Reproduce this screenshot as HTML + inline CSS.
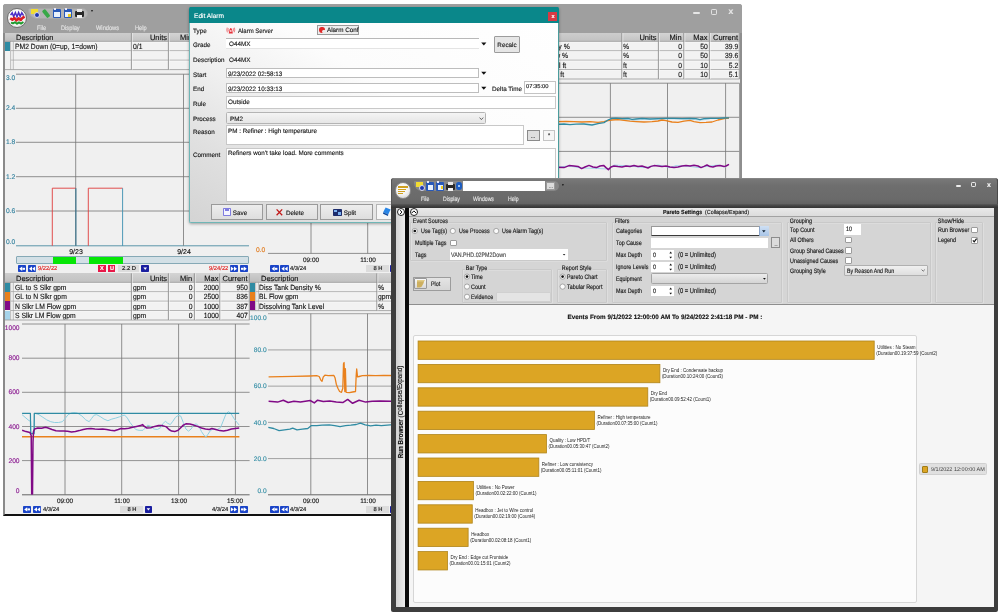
<!DOCTYPE html><html><head><meta charset="utf-8"><title>PARCview</title><style>
*{box-sizing:border-box;margin:0;padding:0}
html,body{width:1000px;height:613px;overflow:hidden;background:#fff}
body{position:relative;font-family:"Liberation Sans",sans-serif}
.a{position:absolute}
.t{white-space:nowrap;transform:rotate(.03deg);-webkit-text-stroke-width:.13px}
svg{position:absolute;left:0;top:0;overflow:visible}
.win{position:absolute;overflow:hidden;will-change:transform}
</style></head><body>
<div class="win" id="w1" style="left:0;top:0;width:745px;height:520px">
<div class="a " style="left:3.00px;top:4.00px;width:739.00px;height:512.00px;background:#f0f0f0;border-left:2px solid #8a8a8a;border-right:2px solid #8e8e8e;border-bottom:2px solid #111;border-radius:3px 3px 0 0"></div>
<div class="a " style="left:3.00px;top:4.00px;width:739.00px;height:29.00px;background:#9f9f9f;border-radius:3px 3px 0 0"></div>
<div class="a " style="left:7.40px;top:8.40px;width:19.80px;height:19.80px;border-radius:50%;background:radial-gradient(circle at 45% 40%,#fff 0,#f6f6f6 55%,#cfcfcf 100%);border:1.1px solid #6e6e6e"></div>
<svg width="745" height="40"><polyline points="10.6,15.2 12.2,12.8 13.6,16.6 15.4,12.6 17,16.8 18.6,12.6 20.2,16.4 21.8,12.8 23.6,15.6" fill="none" stroke="#4a2cc8" stroke-width="1.5"/><polyline points="10.2,18.2 12.4,19.8 14.4,18 16.4,20.4 18.6,18.4 20.8,20 22.6,17.8 24.6,16.6" fill="none" stroke="#dc1c24" stroke-width="2.6" stroke-linejoin="round"/><polyline points="11,22.6 13,23.4 15,22.2 17,23.8 19,22.4 21,23.6 23.4,22" fill="none" stroke="#1c9a2c" stroke-width="1.9" stroke-linejoin="round"/></svg>
<div class="a " style="left:28.00px;top:7.50px;width:60.00px;height:11.00px;background:#b4b4b4;border-radius:2px 6px 6px 10px;border:0.5px solid #a8a8a8"></div>
<div class="a " style="left:31.00px;top:8.50px;width:7.00px;height:5.00px;background:#f2dc30"></div><div class="a " style="left:33.50px;top:11.50px;width:6.00px;height:6.00px;background:#2038b0;border-radius:50%;border:1px solid #d8d8e8"></div>
<div class="a " style="left:44.40px;top:8.80px;width:4.20px;height:8.60px;background:#38a848;transform:rotate(-38deg);border-radius:1.2px"></div>
<div class="a " style="left:53.00px;top:9.00px;width:8.00px;height:8.50px;background:#2858b8;border-radius:1px"></div><div class="a " style="left:54.20px;top:12.00px;width:5.60px;height:4.50px;background:#e8f0fc"></div><div class="a " style="left:54.00px;top:8.20px;width:2.00px;height:2.00px;background:#e8e8f8"></div>
<div class="a " style="left:64.00px;top:9.00px;width:8.00px;height:8.50px;background:#2858b8;border-radius:1px"></div><div class="a " style="left:65.20px;top:12.00px;width:5.60px;height:4.50px;background:#e8f0fc"></div><div class="a " style="left:65.00px;top:8.20px;width:2.00px;height:2.00px;background:#e8e8f8"></div>
<div class="a " style="left:68.40px;top:13.60px;width:3.00px;height:3.00px;background:#f0d020"></div>
<div class="a " style="left:75.00px;top:11.00px;width:9.00px;height:5.50px;background:#282828;border-radius:1px"></div><div class="a " style="left:77.00px;top:9.00px;width:5.00px;height:2.50px;background:#e8e8e8"></div><div class="a " style="left:77.00px;top:14.50px;width:5.00px;height:3.00px;background:#f4f4f4"></div>
<div class="a t " style="left:91.20px;top:9.20px;font-size:4px;line-height:4.80px;color:#222;">▾</div>
<div class="a t " style="left:37.00px;top:23.66px;font-size:6.4px;line-height:7.68px;color:#e4e4e4;transform:scaleX(0.89) rotate(.03deg);transform-origin:0 50%;">File</div>
<div class="a t " style="left:61.00px;top:23.66px;font-size:6.4px;line-height:7.68px;color:#e4e4e4;transform:scaleX(0.89) rotate(.03deg);transform-origin:0 50%;">Display</div>
<div class="a t " style="left:95.50px;top:23.66px;font-size:6.4px;line-height:7.68px;color:#e4e4e4;transform:scaleX(0.89) rotate(.03deg);transform-origin:0 50%;">Windows</div>
<div class="a t " style="left:134.50px;top:23.66px;font-size:6.4px;line-height:7.68px;color:#e4e4e4;transform:scaleX(0.89) rotate(.03deg);transform-origin:0 50%;">Help</div>
<div class="a " style="left:693.40px;top:11.90px;width:6.20px;height:2.10px;background:#e6e6e6;border-radius:1px"></div>
<div class="a " style="left:710.60px;top:9.20px;width:6.80px;height:5.60px;border:1.5px solid #e2e2e2;border-radius:1.2px"></div>
<div class="a t " style="left:631.00px;width:200px;text-align:center;top:6.24px;font-size:8.6px;line-height:10.32px;color:#e8e8e8;font-weight:bold">x</div>
<div class="a " style="left:5.00px;top:33.00px;width:244.60px;height:37.00px;background:#f2f2f2"></div><div class="a " style="left:5.00px;top:33.00px;width:244.60px;height:8.40px;background:linear-gradient(#cfcfcf,#bdbdbd)"></div><div class="a " style="left:14.50px;top:33.00px;width:116.50px;height:8.40px;background:linear-gradient(#cdcdcd,#c2c2c2)"></div><div class="a t " style="left:16.00px;top:32.90px;font-size:7.5px;line-height:9.00px;color:#111;">Description</div><div class="a " style="left:131.50px;top:33.00px;width:36.50px;height:8.40px;background:linear-gradient(#d4d4d4,#c3c3c3)"></div><div class="a t" style="left:131.5px;width:35.00px;text-align:right;top:32.90px;font-size:7.5px;line-height:9.00px;color:#111">Units</div><div class="a " style="left:168.50px;top:33.00px;width:24.70px;height:8.40px;background:linear-gradient(#d4d4d4,#c3c3c3)"></div><div class="a t" style="left:168.5px;width:23.20px;text-align:right;top:32.90px;font-size:7.5px;line-height:9.00px;color:#111">Min</div><div class="a " style="left:194.50px;top:33.00px;width:25.00px;height:8.40px;background:linear-gradient(#d4d4d4,#c3c3c3)"></div><div class="a t" style="left:194.5px;width:23.50px;text-align:right;top:32.90px;font-size:7.5px;line-height:9.00px;color:#111">Max</div><div class="a " style="left:220.00px;top:33.00px;width:29.00px;height:8.40px;background:linear-gradient(#d4d4d4,#c3c3c3)"></div><div class="a t" style="left:220px;width:27.50px;text-align:right;top:32.90px;font-size:7.5px;line-height:9.00px;color:#111">Current</div><div class="a " style="left:4.90px;top:41.60px;width:5.30px;height:9.10px;background:#2f8ba3"></div><div class="a t " style="left:14.90px;top:41.85px;font-size:7.5px;line-height:9.00px;color:#111;transform:scaleX(0.905) rotate(.03deg);transform-origin:0 50%;">PM2 Down (0=up, 1=down)</div><div class="a t " style="left:132.70px;top:41.85px;font-size:7.5px;line-height:9.00px;color:#111;transform:scaleX(0.905) rotate(.03deg);transform-origin:0 50%;">0/1</div><svg width="745" height="520"><line x1="5.00" y1="41.40" x2="249.60" y2="41.40" stroke="#909090" stroke-width="0.9"/><line x1="10.80" y1="42.20" x2="249.60" y2="42.20" stroke="#fbfbfb" stroke-width="0.6"/><line x1="10.80" y1="50.80" x2="249.60" y2="50.80" stroke="#a2a2a2" stroke-width="0.9"/><line x1="10.80" y1="51.60" x2="249.60" y2="51.60" stroke="#fbfbfb" stroke-width="0.6"/><line x1="10.80" y1="60.20" x2="249.60" y2="60.20" stroke="#a2a2a2" stroke-width="0.9"/><line x1="10.80" y1="61.00" x2="249.60" y2="61.00" stroke="#fbfbfb" stroke-width="0.6"/><line x1="5.00" y1="69.60" x2="249.60" y2="69.60" stroke="#a2a2a2" stroke-width="0.9"/><line x1="10.60" y1="41.40" x2="10.60" y2="69.60" stroke="#9a9a9a" stroke-width="0.6"/><line x1="13.30" y1="41.40" x2="13.30" y2="69.60" stroke="#9a9a9a" stroke-width="0.6"/><line x1="131.40" y1="33.00" x2="131.40" y2="69.60" stroke="#8c8c8c" stroke-width="1.0"/><line x1="132.30" y1="33.00" x2="132.30" y2="69.60" stroke="#f8f8f8" stroke-width="0.6"/><line x1="168.40" y1="33.00" x2="168.40" y2="69.60" stroke="#8c8c8c" stroke-width="1.0"/><line x1="169.30" y1="33.00" x2="169.30" y2="69.60" stroke="#f8f8f8" stroke-width="0.6"/><line x1="194.40" y1="33.00" x2="194.40" y2="69.60" stroke="#8c8c8c" stroke-width="1.0"/><line x1="195.30" y1="33.00" x2="195.30" y2="69.60" stroke="#f8f8f8" stroke-width="0.6"/><line x1="219.90" y1="33.00" x2="219.90" y2="69.60" stroke="#8c8c8c" stroke-width="1.0"/><line x1="220.80" y1="33.00" x2="220.80" y2="69.60" stroke="#f8f8f8" stroke-width="0.6"/><line x1="249.30" y1="33.00" x2="249.30" y2="69.60" stroke="#8c8c8c" stroke-width="0.9"/></svg>
<div class="a " style="left:250.10px;top:33.00px;width:489.50px;height:46.40px;background:#f2f2f2"></div><div class="a " style="left:250.10px;top:33.00px;width:489.50px;height:8.40px;background:linear-gradient(#cfcfcf,#bdbdbd)"></div><div class="a " style="left:259.00px;top:33.00px;width:362.50px;height:8.40px;background:linear-gradient(#cdcdcd,#c2c2c2)"></div><div class="a t " style="left:260.50px;top:32.90px;font-size:7.5px;line-height:9.00px;color:#111;">Description</div><div class="a " style="left:622.00px;top:33.00px;width:36.00px;height:8.40px;background:linear-gradient(#d4d4d4,#c3c3c3)"></div><div class="a t" style="left:622px;width:34.50px;text-align:right;top:32.90px;font-size:7.5px;line-height:9.00px;color:#111">Units</div><div class="a " style="left:658.50px;top:33.00px;width:24.20px;height:8.40px;background:linear-gradient(#d4d4d4,#c3c3c3)"></div><div class="a t" style="left:658.5px;width:22.70px;text-align:right;top:32.90px;font-size:7.5px;line-height:9.00px;color:#111">Min</div><div class="a " style="left:684.00px;top:33.00px;width:25.00px;height:8.40px;background:linear-gradient(#d4d4d4,#c3c3c3)"></div><div class="a t" style="left:684px;width:23.50px;text-align:right;top:32.90px;font-size:7.5px;line-height:9.00px;color:#111">Max</div><div class="a " style="left:709.50px;top:33.00px;width:29.50px;height:8.40px;background:linear-gradient(#d4d4d4,#c3c3c3)"></div><div class="a t" style="left:709.5px;width:28.00px;text-align:right;top:32.90px;font-size:7.5px;line-height:9.00px;color:#111">Current</div><div class="a " style="left:250.00px;top:41.60px;width:5.30px;height:9.10px;background:#2f8ba3"></div><div class="a t " style="right:175.00px;top:41.85px;font-size:7.5px;line-height:9.00px;color:#111;transform:scaleX(0.905) rotate(.03deg);transform-origin:100% 50%;">Dissolving Tank Green Liquor Density %</div><div class="a t " style="left:623.20px;top:41.85px;font-size:7.5px;line-height:9.00px;color:#111;transform:scaleX(0.905) rotate(.03deg);transform-origin:0 50%;">%</div><div class="a t" style="left:658.5px;width:23.00px;text-align:right;top:41.85px;font-size:7.5px;line-height:9.00px;color:#111;transform:scaleX(0.905) rotate(.03deg);transform-origin:100% 50%">0</div><div class="a t" style="left:684px;width:23.80px;text-align:right;top:41.85px;font-size:7.5px;line-height:9.00px;color:#111;transform:scaleX(0.905) rotate(.03deg);transform-origin:100% 50%">50</div><div class="a t" style="left:709.5px;width:28.30px;text-align:right;top:41.85px;font-size:7.5px;line-height:9.00px;color:#111;transform:scaleX(0.905) rotate(.03deg);transform-origin:100% 50%">39.9</div><div class="a " style="left:250.00px;top:51.00px;width:5.30px;height:9.10px;background:#e9801c"></div><div class="a t " style="right:177.20px;top:51.25px;font-size:7.5px;line-height:9.00px;color:#111;transform:scaleX(0.905) rotate(.03deg);transform-origin:100% 50%;">Weak Wash to Dissolving Tank Flow %</div><div class="a t " style="left:623.20px;top:51.25px;font-size:7.5px;line-height:9.00px;color:#111;transform:scaleX(0.905) rotate(.03deg);transform-origin:0 50%;">%</div><div class="a t" style="left:658.5px;width:23.00px;text-align:right;top:51.25px;font-size:7.5px;line-height:9.00px;color:#111;transform:scaleX(0.905) rotate(.03deg);transform-origin:100% 50%">0</div><div class="a t" style="left:684px;width:23.80px;text-align:right;top:51.25px;font-size:7.5px;line-height:9.00px;color:#111;transform:scaleX(0.905) rotate(.03deg);transform-origin:100% 50%">50</div><div class="a t" style="left:709.5px;width:28.30px;text-align:right;top:51.25px;font-size:7.5px;line-height:9.00px;color:#111;transform:scaleX(0.905) rotate(.03deg);transform-origin:100% 50%">39.6</div><div class="a " style="left:250.00px;top:60.40px;width:5.30px;height:9.10px;background:#800a86"></div><div class="a t " style="right:178.60px;top:60.65px;font-size:7.5px;line-height:9.00px;color:#111;transform:scaleX(0.905) rotate(.03deg);transform-origin:100% 50%;">Dissolving Tank Level ft</div><div class="a t " style="left:623.20px;top:60.65px;font-size:7.5px;line-height:9.00px;color:#111;transform:scaleX(0.905) rotate(.03deg);transform-origin:0 50%;">ft</div><div class="a t" style="left:658.5px;width:23.00px;text-align:right;top:60.65px;font-size:7.5px;line-height:9.00px;color:#111;transform:scaleX(0.905) rotate(.03deg);transform-origin:100% 50%">0</div><div class="a t" style="left:684px;width:23.80px;text-align:right;top:60.65px;font-size:7.5px;line-height:9.00px;color:#111;transform:scaleX(0.905) rotate(.03deg);transform-origin:100% 50%">10</div><div class="a t" style="left:709.5px;width:28.30px;text-align:right;top:60.65px;font-size:7.5px;line-height:9.00px;color:#111;transform:scaleX(0.905) rotate(.03deg);transform-origin:100% 50%">5.2</div><div class="a " style="left:250.00px;top:69.80px;width:5.30px;height:9.10px;background:#a6d4ea"></div><div class="a t " style="right:180.80px;top:70.05px;font-size:7.5px;line-height:9.00px;color:#111;transform:scaleX(0.905) rotate(.03deg);transform-origin:100% 50%;">Weak Wash Tank Level ft</div><div class="a t " style="left:623.20px;top:70.05px;font-size:7.5px;line-height:9.00px;color:#111;transform:scaleX(0.905) rotate(.03deg);transform-origin:0 50%;">ft</div><div class="a t" style="left:658.5px;width:23.00px;text-align:right;top:70.05px;font-size:7.5px;line-height:9.00px;color:#111;transform:scaleX(0.905) rotate(.03deg);transform-origin:100% 50%">0</div><div class="a t" style="left:684px;width:23.80px;text-align:right;top:70.05px;font-size:7.5px;line-height:9.00px;color:#111;transform:scaleX(0.905) rotate(.03deg);transform-origin:100% 50%">10</div><div class="a t" style="left:709.5px;width:28.30px;text-align:right;top:70.05px;font-size:7.5px;line-height:9.00px;color:#111;transform:scaleX(0.905) rotate(.03deg);transform-origin:100% 50%">5.1</div><svg width="745" height="520"><line x1="250.10" y1="41.40" x2="739.60" y2="41.40" stroke="#909090" stroke-width="0.9"/><line x1="255.90" y1="42.20" x2="739.60" y2="42.20" stroke="#fbfbfb" stroke-width="0.6"/><line x1="255.90" y1="50.80" x2="739.60" y2="50.80" stroke="#a2a2a2" stroke-width="0.9"/><line x1="255.90" y1="51.60" x2="739.60" y2="51.60" stroke="#fbfbfb" stroke-width="0.6"/><line x1="255.90" y1="60.20" x2="739.60" y2="60.20" stroke="#a2a2a2" stroke-width="0.9"/><line x1="255.90" y1="61.00" x2="739.60" y2="61.00" stroke="#fbfbfb" stroke-width="0.6"/><line x1="255.90" y1="69.60" x2="739.60" y2="69.60" stroke="#a2a2a2" stroke-width="0.9"/><line x1="255.90" y1="70.40" x2="739.60" y2="70.40" stroke="#fbfbfb" stroke-width="0.6"/><line x1="250.10" y1="79.00" x2="739.60" y2="79.00" stroke="#a2a2a2" stroke-width="0.9"/><line x1="255.70" y1="41.40" x2="255.70" y2="79.00" stroke="#9a9a9a" stroke-width="0.6"/><line x1="258.40" y1="41.40" x2="258.40" y2="79.00" stroke="#9a9a9a" stroke-width="0.6"/><line x1="621.90" y1="33.00" x2="621.90" y2="79.00" stroke="#8c8c8c" stroke-width="1.0"/><line x1="622.80" y1="33.00" x2="622.80" y2="79.00" stroke="#f8f8f8" stroke-width="0.6"/><line x1="658.40" y1="33.00" x2="658.40" y2="79.00" stroke="#8c8c8c" stroke-width="1.0"/><line x1="659.30" y1="33.00" x2="659.30" y2="79.00" stroke="#f8f8f8" stroke-width="0.6"/><line x1="683.90" y1="33.00" x2="683.90" y2="79.00" stroke="#8c8c8c" stroke-width="1.0"/><line x1="684.80" y1="33.00" x2="684.80" y2="79.00" stroke="#f8f8f8" stroke-width="0.6"/><line x1="709.40" y1="33.00" x2="709.40" y2="79.00" stroke="#8c8c8c" stroke-width="1.0"/><line x1="710.30" y1="33.00" x2="710.30" y2="79.00" stroke="#f8f8f8" stroke-width="0.6"/><line x1="739.30" y1="33.00" x2="739.30" y2="79.00" stroke="#8c8c8c" stroke-width="0.9"/></svg>
<div class="a " style="left:5.00px;top:273.40px;width:244.60px;height:47.00px;background:#f2f2f2"></div><div class="a " style="left:5.00px;top:273.40px;width:244.60px;height:9.00px;background:linear-gradient(#cfcfcf,#bdbdbd)"></div><div class="a " style="left:14.50px;top:273.40px;width:116.50px;height:9.00px;background:linear-gradient(#cdcdcd,#c2c2c2)"></div><div class="a t " style="left:16.00px;top:273.60px;font-size:7.5px;line-height:9.00px;color:#111;">Description</div><div class="a " style="left:131.50px;top:273.40px;width:36.50px;height:9.00px;background:linear-gradient(#d4d4d4,#c3c3c3)"></div><div class="a t" style="left:131.5px;width:35.00px;text-align:right;top:273.60px;font-size:7.5px;line-height:9.00px;color:#111">Units</div><div class="a " style="left:168.50px;top:273.40px;width:24.70px;height:9.00px;background:linear-gradient(#d4d4d4,#c3c3c3)"></div><div class="a t" style="left:168.5px;width:23.20px;text-align:right;top:273.60px;font-size:7.5px;line-height:9.00px;color:#111">Min</div><div class="a " style="left:194.50px;top:273.40px;width:25.00px;height:9.00px;background:linear-gradient(#d4d4d4,#c3c3c3)"></div><div class="a t" style="left:194.5px;width:23.50px;text-align:right;top:273.60px;font-size:7.5px;line-height:9.00px;color:#111">Max</div><div class="a " style="left:220.00px;top:273.40px;width:29.00px;height:9.00px;background:linear-gradient(#d4d4d4,#c3c3c3)"></div><div class="a t" style="left:220px;width:27.50px;text-align:right;top:273.60px;font-size:7.5px;line-height:9.00px;color:#111">Current</div><div class="a " style="left:4.90px;top:282.60px;width:5.30px;height:9.10px;background:#2f8ba3"></div><div class="a t " style="left:14.90px;top:282.85px;font-size:7.5px;line-height:9.00px;color:#111;transform:scaleX(0.905) rotate(.03deg);transform-origin:0 50%;">GL to S Slkr gpm</div><div class="a t " style="left:132.70px;top:282.85px;font-size:7.5px;line-height:9.00px;color:#111;transform:scaleX(0.905) rotate(.03deg);transform-origin:0 50%;">gpm</div><div class="a t" style="left:168.5px;width:23.50px;text-align:right;top:282.85px;font-size:7.5px;line-height:9.00px;color:#111;transform:scaleX(0.905) rotate(.03deg);transform-origin:100% 50%">0</div><div class="a t" style="left:194.5px;width:23.80px;text-align:right;top:282.85px;font-size:7.5px;line-height:9.00px;color:#111;transform:scaleX(0.905) rotate(.03deg);transform-origin:100% 50%">2000</div><div class="a t" style="left:220px;width:27.80px;text-align:right;top:282.85px;font-size:7.5px;line-height:9.00px;color:#111;transform:scaleX(0.905) rotate(.03deg);transform-origin:100% 50%">950</div><div class="a " style="left:4.90px;top:292.00px;width:5.30px;height:9.10px;background:#e9801c"></div><div class="a t " style="left:14.90px;top:292.25px;font-size:7.5px;line-height:9.00px;color:#111;transform:scaleX(0.905) rotate(.03deg);transform-origin:0 50%;">GL to N Slkr gpm</div><div class="a t " style="left:132.70px;top:292.25px;font-size:7.5px;line-height:9.00px;color:#111;transform:scaleX(0.905) rotate(.03deg);transform-origin:0 50%;">gpm</div><div class="a t" style="left:168.5px;width:23.50px;text-align:right;top:292.25px;font-size:7.5px;line-height:9.00px;color:#111;transform:scaleX(0.905) rotate(.03deg);transform-origin:100% 50%">0</div><div class="a t" style="left:194.5px;width:23.80px;text-align:right;top:292.25px;font-size:7.5px;line-height:9.00px;color:#111;transform:scaleX(0.905) rotate(.03deg);transform-origin:100% 50%">2500</div><div class="a t" style="left:220px;width:27.80px;text-align:right;top:292.25px;font-size:7.5px;line-height:9.00px;color:#111;transform:scaleX(0.905) rotate(.03deg);transform-origin:100% 50%">836</div><div class="a " style="left:4.90px;top:301.40px;width:5.30px;height:9.10px;background:#800a86"></div><div class="a t " style="left:14.90px;top:301.65px;font-size:7.5px;line-height:9.00px;color:#111;transform:scaleX(0.905) rotate(.03deg);transform-origin:0 50%;">N Slkr LM Flow gpm</div><div class="a t " style="left:132.70px;top:301.65px;font-size:7.5px;line-height:9.00px;color:#111;transform:scaleX(0.905) rotate(.03deg);transform-origin:0 50%;">gpm</div><div class="a t" style="left:168.5px;width:23.50px;text-align:right;top:301.65px;font-size:7.5px;line-height:9.00px;color:#111;transform:scaleX(0.905) rotate(.03deg);transform-origin:100% 50%">0</div><div class="a t" style="left:194.5px;width:23.80px;text-align:right;top:301.65px;font-size:7.5px;line-height:9.00px;color:#111;transform:scaleX(0.905) rotate(.03deg);transform-origin:100% 50%">1000</div><div class="a t" style="left:220px;width:27.80px;text-align:right;top:301.65px;font-size:7.5px;line-height:9.00px;color:#111;transform:scaleX(0.905) rotate(.03deg);transform-origin:100% 50%">387</div><div class="a " style="left:4.90px;top:310.80px;width:5.30px;height:9.10px;background:#a6d4ea"></div><div class="a t " style="left:14.90px;top:311.05px;font-size:7.5px;line-height:9.00px;color:#111;transform:scaleX(0.905) rotate(.03deg);transform-origin:0 50%;">S Slkr LM Flow gpm</div><div class="a t " style="left:132.70px;top:311.05px;font-size:7.5px;line-height:9.00px;color:#111;transform:scaleX(0.905) rotate(.03deg);transform-origin:0 50%;">gpm</div><div class="a t" style="left:168.5px;width:23.50px;text-align:right;top:311.05px;font-size:7.5px;line-height:9.00px;color:#111;transform:scaleX(0.905) rotate(.03deg);transform-origin:100% 50%">0</div><div class="a t" style="left:194.5px;width:23.80px;text-align:right;top:311.05px;font-size:7.5px;line-height:9.00px;color:#111;transform:scaleX(0.905) rotate(.03deg);transform-origin:100% 50%">1000</div><div class="a t" style="left:220px;width:27.80px;text-align:right;top:311.05px;font-size:7.5px;line-height:9.00px;color:#111;transform:scaleX(0.905) rotate(.03deg);transform-origin:100% 50%">407</div><svg width="745" height="520"><line x1="5.00" y1="282.40" x2="249.60" y2="282.40" stroke="#909090" stroke-width="0.9"/><line x1="10.80" y1="283.20" x2="249.60" y2="283.20" stroke="#fbfbfb" stroke-width="0.6"/><line x1="10.80" y1="291.80" x2="249.60" y2="291.80" stroke="#a2a2a2" stroke-width="0.9"/><line x1="10.80" y1="292.60" x2="249.60" y2="292.60" stroke="#fbfbfb" stroke-width="0.6"/><line x1="10.80" y1="301.20" x2="249.60" y2="301.20" stroke="#a2a2a2" stroke-width="0.9"/><line x1="10.80" y1="302.00" x2="249.60" y2="302.00" stroke="#fbfbfb" stroke-width="0.6"/><line x1="10.80" y1="310.60" x2="249.60" y2="310.60" stroke="#a2a2a2" stroke-width="0.9"/><line x1="10.80" y1="311.40" x2="249.60" y2="311.40" stroke="#fbfbfb" stroke-width="0.6"/><line x1="5.00" y1="320.00" x2="249.60" y2="320.00" stroke="#a2a2a2" stroke-width="0.9"/><line x1="10.60" y1="282.40" x2="10.60" y2="320.00" stroke="#9a9a9a" stroke-width="0.6"/><line x1="13.30" y1="282.40" x2="13.30" y2="320.00" stroke="#9a9a9a" stroke-width="0.6"/><line x1="131.40" y1="273.40" x2="131.40" y2="320.00" stroke="#8c8c8c" stroke-width="1.0"/><line x1="132.30" y1="273.40" x2="132.30" y2="320.00" stroke="#f8f8f8" stroke-width="0.6"/><line x1="168.40" y1="273.40" x2="168.40" y2="320.00" stroke="#8c8c8c" stroke-width="1.0"/><line x1="169.30" y1="273.40" x2="169.30" y2="320.00" stroke="#f8f8f8" stroke-width="0.6"/><line x1="194.40" y1="273.40" x2="194.40" y2="320.00" stroke="#8c8c8c" stroke-width="1.0"/><line x1="195.30" y1="273.40" x2="195.30" y2="320.00" stroke="#f8f8f8" stroke-width="0.6"/><line x1="219.90" y1="273.40" x2="219.90" y2="320.00" stroke="#8c8c8c" stroke-width="1.0"/><line x1="220.80" y1="273.40" x2="220.80" y2="320.00" stroke="#f8f8f8" stroke-width="0.6"/><line x1="249.30" y1="273.40" x2="249.30" y2="320.00" stroke="#8c8c8c" stroke-width="0.9"/></svg>
<div class="a " style="left:250.10px;top:273.40px;width:163.50px;height:37.60px;background:#f2f2f2"></div><div class="a " style="left:250.10px;top:273.40px;width:163.50px;height:9.00px;background:linear-gradient(#cfcfcf,#bdbdbd)"></div><div class="a " style="left:259.00px;top:273.40px;width:117.50px;height:9.00px;background:linear-gradient(#cdcdcd,#c2c2c2)"></div><div class="a t " style="left:260.50px;top:273.60px;font-size:7.5px;line-height:9.00px;color:#111;">Description</div><div class="a " style="left:377.00px;top:273.40px;width:36.00px;height:9.00px;background:linear-gradient(#d4d4d4,#c3c3c3)"></div><div class="a t" style="left:377px;width:34.50px;text-align:right;top:273.60px;font-size:7.5px;line-height:9.00px;color:#111">Units</div><div class="a " style="left:250.00px;top:282.60px;width:5.30px;height:9.10px;background:#2f8ba3"></div><div class="a t " style="left:259.40px;top:282.85px;font-size:7.5px;line-height:9.00px;color:#111;transform:scaleX(0.905) rotate(.03deg);transform-origin:0 50%;">Diss Tank Density %</div><div class="a t " style="left:378.20px;top:282.85px;font-size:7.5px;line-height:9.00px;color:#111;transform:scaleX(0.905) rotate(.03deg);transform-origin:0 50%;">%</div><div class="a " style="left:250.00px;top:292.00px;width:5.30px;height:9.10px;background:#e9801c"></div><div class="a t " style="left:259.40px;top:292.25px;font-size:7.5px;line-height:9.00px;color:#111;transform:scaleX(0.905) rotate(.03deg);transform-origin:0 50%;">BL Flow gpm</div><div class="a t " style="left:378.20px;top:292.25px;font-size:7.5px;line-height:9.00px;color:#111;transform:scaleX(0.905) rotate(.03deg);transform-origin:0 50%;">gpm</div><div class="a " style="left:250.00px;top:301.40px;width:5.30px;height:9.10px;background:#800a86"></div><div class="a t " style="left:259.40px;top:301.65px;font-size:7.5px;line-height:9.00px;color:#111;transform:scaleX(0.905) rotate(.03deg);transform-origin:0 50%;">Dissolving Tank Level</div><div class="a t " style="left:378.20px;top:301.65px;font-size:7.5px;line-height:9.00px;color:#111;transform:scaleX(0.905) rotate(.03deg);transform-origin:0 50%;">%</div><svg width="745" height="520"><line x1="250.10" y1="282.40" x2="413.60" y2="282.40" stroke="#909090" stroke-width="0.9"/><line x1="255.90" y1="283.20" x2="413.60" y2="283.20" stroke="#fbfbfb" stroke-width="0.6"/><line x1="255.90" y1="291.80" x2="413.60" y2="291.80" stroke="#a2a2a2" stroke-width="0.9"/><line x1="255.90" y1="292.60" x2="413.60" y2="292.60" stroke="#fbfbfb" stroke-width="0.6"/><line x1="255.90" y1="301.20" x2="413.60" y2="301.20" stroke="#a2a2a2" stroke-width="0.9"/><line x1="255.90" y1="302.00" x2="413.60" y2="302.00" stroke="#fbfbfb" stroke-width="0.6"/><line x1="250.10" y1="310.60" x2="413.60" y2="310.60" stroke="#a2a2a2" stroke-width="0.9"/><line x1="255.70" y1="282.40" x2="255.70" y2="310.60" stroke="#9a9a9a" stroke-width="0.6"/><line x1="258.40" y1="282.40" x2="258.40" y2="310.60" stroke="#9a9a9a" stroke-width="0.6"/><line x1="376.90" y1="273.40" x2="376.90" y2="310.60" stroke="#8c8c8c" stroke-width="1.0"/><line x1="377.80" y1="273.40" x2="377.80" y2="310.60" stroke="#f8f8f8" stroke-width="0.6"/><line x1="413.30" y1="273.40" x2="413.30" y2="310.60" stroke="#8c8c8c" stroke-width="0.9"/></svg>
<svg width="745" height="520"><line x1="16.00" y1="74.20" x2="249.00" y2="74.20" stroke="#757575" stroke-width="0.8"/><line x1="16.00" y1="108.30" x2="249.00" y2="108.30" stroke="#757575" stroke-width="0.8"/><line x1="16.00" y1="142.30" x2="249.00" y2="142.30" stroke="#757575" stroke-width="0.8"/><line x1="16.00" y1="176.70" x2="249.00" y2="176.70" stroke="#757575" stroke-width="0.8"/><line x1="16.00" y1="211.00" x2="249.00" y2="211.00" stroke="#757575" stroke-width="0.8"/><line x1="16.00" y1="245.80" x2="249.00" y2="245.80" stroke="#4a8aa0" stroke-width="0.9"/><line x1="75.70" y1="74.20" x2="75.70" y2="245.80" stroke="#757575" stroke-width="0.8"/><line x1="183.50" y1="74.20" x2="183.50" y2="245.80" stroke="#757575" stroke-width="0.8"/><polyline fill="none" stroke="#e03c3c" stroke-width="0.9" stroke-linejoin="round" points="52.3,245.8 52.3,188.2 75.7,188.2"/><polyline fill="none" stroke="#2b6f8c" stroke-width="1.0" stroke-linejoin="round" points="75.9,188.2 75.9,245.8"/><polyline fill="none" stroke="#e03c3c" stroke-width="0.9" stroke-linejoin="round" points="88.3,245.8 88.3,188.2 122.6,188.2"/><polyline fill="none" stroke="#3b8fb0" stroke-width="0.9" stroke-linejoin="round" points="122.6,188.2 122.6,245.8"/><line x1="268.00" y1="83.20" x2="739.50" y2="83.20" stroke="#757575" stroke-width="0.8"/><line x1="268.00" y1="117.30" x2="739.50" y2="117.30" stroke="#757575" stroke-width="0.8"/><line x1="268.00" y1="151.40" x2="739.50" y2="151.40" stroke="#757575" stroke-width="0.8"/><line x1="268.00" y1="185.50" x2="739.50" y2="185.50" stroke="#757575" stroke-width="0.8"/><line x1="268.00" y1="219.60" x2="739.50" y2="219.60" stroke="#757575" stroke-width="0.8"/><line x1="268.00" y1="253.40" x2="739.50" y2="253.40" stroke="#757575" stroke-width="0.8"/><line x1="311.00" y1="83.20" x2="311.00" y2="253.40" stroke="#757575" stroke-width="0.8"/><line x1="367.70" y1="83.20" x2="367.70" y2="253.40" stroke="#757575" stroke-width="0.8"/><line x1="424.50" y1="83.20" x2="424.50" y2="253.40" stroke="#757575" stroke-width="0.8"/><line x1="553.50" y1="83.20" x2="553.50" y2="253.40" stroke="#757575" stroke-width="0.8"/><line x1="610.40" y1="83.20" x2="610.40" y2="253.40" stroke="#757575" stroke-width="0.8"/><line x1="667.50" y1="83.20" x2="667.50" y2="253.40" stroke="#757575" stroke-width="0.8"/><line x1="725.60" y1="83.20" x2="725.60" y2="253.40" stroke="#757575" stroke-width="0.8"/><line x1="739.50" y1="83.20" x2="739.50" y2="253.40" stroke="#8a8a8a" stroke-width="0.8"/><polyline fill="none" stroke="#a6d4ea" stroke-width="0.9" stroke-linejoin="round" points="608.0,119.6 616.0,118.8 634.0,120.2 646.0,119.2 658.0,119.4 670.0,118.8 690.0,119.0 700.0,120.2 710.0,118.8"/><polyline fill="none" stroke="#e9801c" stroke-width="1.3" stroke-linejoin="round" points="556.0,121.6 566.0,121.4 574.0,121.6 582.0,122.0 590.0,121.6 598.0,122.4 604.0,121.6 608.0,120.6 612.0,120.0 618.0,119.6 624.0,120.4 630.0,121.2 636.0,121.6 644.0,122.0 652.0,121.6 658.0,121.0 662.0,120.0 666.0,120.6 672.0,122.0 678.0,122.4 684.0,121.2 690.0,120.4 694.0,121.6 700.0,122.6 706.0,122.4 712.0,122.0 718.0,120.0 724.0,118.6 729.0,118.0"/><polyline fill="none" stroke="#2f8ba3" stroke-width="1.3" stroke-linejoin="round" points="556.0,124.4 564.0,124.0 570.0,124.6 576.0,124.2 584.0,124.0 592.0,125.0 598.0,123.6 604.0,122.6 608.0,120.0 612.0,118.4 616.0,118.2 622.0,118.6 628.0,118.4 632.0,119.4 636.0,119.0 642.0,118.4 650.0,119.0 658.0,118.6 666.0,118.4 674.0,118.4 682.0,118.6 690.0,118.4 696.0,118.6 700.0,119.6 704.0,118.6 710.0,118.4 718.0,118.4 724.0,118.0 729.0,117.8"/><polyline fill="none" stroke="#a6d4ea" stroke-width="1.0" stroke-linejoin="round" points="556.0,167.2 569.0,166.0 581.6,168.0 595.0,168.4 608.4,169.0 614.0,165.0 630.0,166.0 644.0,167.6 658.0,165.0 670.0,167.6 676.0,165.6 690.0,166.4 698.0,167.6 710.0,166.0 718.0,165.0 726.0,167.0"/><polyline fill="none" stroke="#800a86" stroke-width="1.5" stroke-linejoin="round" points="556.0,167.2 564.0,167.6 569.0,165.6 574.0,166.0 578.0,166.4 581.6,168.6 585.0,167.0 589.0,165.4 593.0,167.0 596.4,167.6 600.0,166.0 603.6,165.4 606.0,167.6 608.4,169.6 611.0,167.0 614.0,166.0 618.0,166.6 622.0,167.0 626.0,166.0 630.0,166.6 634.0,165.6 638.0,166.4 642.0,166.0 645.0,167.0 648.0,168.0 651.0,166.4 654.0,165.6 658.0,166.0 662.0,166.6 666.0,166.0 670.0,167.0 674.0,167.6 678.0,167.0 682.0,166.0 686.0,165.6 690.0,166.0 694.0,165.2 698.0,166.0 701.0,167.6 704.0,166.4 707.0,165.0 710.0,166.6 713.0,167.0 716.0,166.0 720.0,165.6 724.0,166.6 726.0,166.0 729.0,164.4"/><line x1="22.00" y1="324.00" x2="249.60" y2="324.00" stroke="#787878" stroke-width="0.8"/><line x1="22.00" y1="358.20" x2="249.60" y2="358.20" stroke="#787878" stroke-width="0.8"/><line x1="22.00" y1="392.30" x2="249.60" y2="392.30" stroke="#787878" stroke-width="0.8"/><line x1="22.00" y1="426.50" x2="249.60" y2="426.50" stroke="#787878" stroke-width="0.8"/><line x1="22.00" y1="460.60" x2="249.60" y2="460.60" stroke="#787878" stroke-width="0.8"/><line x1="22.00" y1="494.80" x2="249.60" y2="494.80" stroke="#555" stroke-width="0.9"/><line x1="65.00" y1="324.00" x2="65.00" y2="494.80" stroke="#757575" stroke-width="0.8"/><line x1="121.70" y1="324.00" x2="121.70" y2="494.80" stroke="#757575" stroke-width="0.8"/><line x1="178.60" y1="324.00" x2="178.60" y2="494.80" stroke="#757575" stroke-width="0.8"/><line x1="235.40" y1="324.00" x2="235.40" y2="494.80" stroke="#757575" stroke-width="0.8"/><polyline fill="none" stroke="#e9801c" stroke-width="1.4" stroke-linejoin="round" points="22.0,436.8 239.4,436.8"/><polyline fill="none" stroke="#8fd0e0" stroke-width="1.0" stroke-linejoin="round" points="22.1,414.7 26.0,418.1 29.1,420.7 30.7,421.2 30.9,432.9 31.5,432.9 34.1,432.9 34.3,413.4 35.1,413.4 39.0,414.7 42.9,417.3 46.8,419.9 50.7,421.7 54.6,422.5 58.5,422.5 62.4,421.7 65.0,418.6 68.1,414.7 71.5,412.9 75.4,412.6 78.0,413.4 81.9,416.0 85.8,419.9 89.2,421.7 91.5,418.6 94.1,415.2 96.7,414.7 100.1,416.5 104.0,419.1 107.9,420.7 111.8,419.1 115.7,418.1 119.6,416.8 122.2,415.5 124.8,415.2 127.4,418.1 130.0,422.5 133.1,426.4 135.7,429.5 139.1,430.3 143.0,430.3 145.6,427.7 147.7,425.1 150.8,426.4 153.9,429.0 157.3,429.5 160.7,427.7 163.3,423.3 165.4,421.2 167.7,423.3 170.3,424.6 172.9,421.2 175.5,417.3 178.1,415.5 180.7,416.0 183.3,422.5 185.9,429.0 188.5,431.1 191.1,429.0 193.7,425.1 196.3,423.8 198.9,426.4 201.5,431.6 204.1,435.5 206.2,436.8 208.0,434.2 210.6,430.3 213.7,429.0 217.1,429.5 220.5,427.7 223.1,421.2 225.7,414.7 228.3,411.6 230.9,413.4 234.0,418.6 237.1,422.5 239.2,425.1"/><polyline fill="none" stroke="#2f8ba3" stroke-width="1.2" stroke-linejoin="round" points="22.1,413.4 30.4,413.4 30.7,433.7 31.2,433.7 34.1,433.7 34.3,413.4 239.2,413.4"/><polyline fill="none" stroke="#800a86" stroke-width="1.5" stroke-linejoin="round" points="22.1,430.3 26.0,431.6 29.9,432.4 31.2,435.5 31.7,494.0 32.5,494.0 33.0,442.0 33.5,431.6 34.6,429.0 37.7,428.0 41.6,428.2 45.5,427.2 48.1,428.0 52.0,429.5 55.9,430.8 59.8,431.1 63.7,431.1 67.6,431.3 71.5,432.1 75.4,431.6 79.3,430.6 83.2,429.5 87.1,428.7 91.0,428.5 94.9,429.0 98.8,429.3 102.7,429.0 106.6,429.5 110.5,430.3 114.4,430.8 118.3,429.5 120.9,428.5 124.8,428.7 128.7,428.2 132.6,427.2 136.5,426.4 140.4,425.6 142.5,424.6 144.3,426.4 146.9,428.0 150.8,427.7 154.7,426.4 158.6,425.4 162.5,425.6 166.4,426.9 169.0,429.5 171.6,431.1 174.7,431.6 178.1,430.3 180.7,427.7 183.3,425.1 185.9,423.8 189.8,424.1 193.7,425.1 197.6,426.4 201.5,428.0 205.4,429.0 209.3,429.5 211.9,428.5 215.8,429.5 219.7,430.6 223.6,431.1 227.5,430.3 231.4,429.0 235.3,428.5 239.2,428.0"/><line x1="268.00" y1="313.70" x2="413.00" y2="313.70" stroke="#808080" stroke-width="0.7"/><line x1="268.00" y1="349.92" x2="413.00" y2="349.92" stroke="#808080" stroke-width="0.7"/><line x1="268.00" y1="386.14" x2="413.00" y2="386.14" stroke="#808080" stroke-width="0.7"/><line x1="268.00" y1="422.36" x2="413.00" y2="422.36" stroke="#808080" stroke-width="0.7"/><line x1="268.00" y1="458.58" x2="413.00" y2="458.58" stroke="#808080" stroke-width="0.7"/><line x1="268.00" y1="494.80" x2="413.00" y2="494.80" stroke="#555" stroke-width="0.9"/><line x1="310.80" y1="313.70" x2="310.80" y2="494.80" stroke="#757575" stroke-width="0.8"/><line x1="367.50" y1="313.70" x2="367.50" y2="494.80" stroke="#757575" stroke-width="0.8"/><polyline fill="none" stroke="#e9801c" stroke-width="1.3" stroke-linejoin="round" points="268.6,376.9 293.9,376.4 310.2,376.0 316.7,375.7 319.2,376.5 320.8,380.1 322.0,381.3 323.3,376.9 324.9,375.2 328.2,375.7 333.9,375.5 335.0,377.7 336.3,384.2 337.9,388.3 339.6,391.5 341.5,392.3 342.8,388.3 343.5,363.8 344.1,362.5 344.8,391.5 345.4,368.7 346.1,392.3 349.4,392.7 352.6,392.0 355.5,391.5 356.2,375.2 356.7,369.0 357.5,376.9 359.1,376.5 362.4,375.7 368.9,375.4 375.4,375.7 383.6,375.5 412.9,375.7"/><polyline fill="none" stroke="#800a86" stroke-width="1.5" stroke-linejoin="round" points="268.6,401.3 277.6,402.1 283.3,400.2 288.2,402.5 293.9,401.3 300.4,402.1 305.3,401.3 310.2,400.5 314.3,402.9 317.6,400.2 323.3,401.6 329.8,401.0 336.3,402.1 342.8,402.6 347.7,399.4 352.6,403.3 359.1,400.2 365.7,402.1 372.2,401.3 380.3,401.0 390.9,401.3 401.5,401.8 412.9,401.1"/><polyline fill="none" stroke="#2f8ba3" stroke-width="1.3" stroke-linejoin="round" points="268.3,427.4 273.7,428.5 279.1,430.6 284.5,429.9 289.9,429.2 292.7,428.1 297.0,429.9 302.4,429.2 307.8,428.5 311.4,425.6 316.8,425.6 322.1,425.2 329.3,424.9 334.7,425.6 340.1,426.7 345.5,425.6 350.8,425.2 356.2,424.5 360.5,423.1 365.2,424.9 370.6,425.9 376.0,425.2 381.3,425.6 390.3,424.9 413.6,424.9"/></svg>
<div class="a t " style="left:5.70px;top:73.58px;font-size:6.7px;line-height:8.04px;color:#2f7f9c;">3.0</div>
<div class="a t " style="left:5.70px;top:104.28px;font-size:6.7px;line-height:8.04px;color:#2f7f9c;">2.4</div>
<div class="a t " style="left:5.70px;top:138.28px;font-size:6.7px;line-height:8.04px;color:#2f7f9c;">1.8</div>
<div class="a t " style="left:5.70px;top:172.68px;font-size:6.7px;line-height:8.04px;color:#2f7f9c;">1.2</div>
<div class="a t " style="left:5.70px;top:206.98px;font-size:6.7px;line-height:8.04px;color:#2f7f9c;">0.6</div>
<div class="a t " style="left:5.70px;top:238.18px;font-size:6.7px;line-height:8.04px;color:#2f7f9c;">0.0</div>
<div class="a t " style="left:-24.50px;width:200px;text-align:center;top:248.00px;font-size:7px;line-height:8.40px;color:#111;">9/23</div>
<div class="a t " style="left:83.50px;width:200px;text-align:center;top:248.00px;font-size:7px;line-height:8.40px;color:#111;">9/24</div>
<div class="a t " style="left:256.00px;top:245.98px;font-size:6.7px;line-height:8.04px;color:#e07818;">0.0</div>
<div class="a t " style="left:211.00px;width:200px;text-align:center;top:256.16px;font-size:6.4px;line-height:7.68px;color:#111;">09:00</div>
<div class="a t " style="left:267.70px;width:200px;text-align:center;top:256.16px;font-size:6.4px;line-height:7.68px;color:#111;">11:00</div>
<div class="a t" style="left:0;width:19.6px;text-align:right;top:324.00px;font-size:6.7px;line-height:8px;color:#8a1890">1000</div>
<div class="a t" style="left:0;width:19.6px;text-align:right;top:354.20px;font-size:6.7px;line-height:8px;color:#8a1890">800</div>
<div class="a t" style="left:0;width:19.6px;text-align:right;top:388.30px;font-size:6.7px;line-height:8px;color:#8a1890">600</div>
<div class="a t" style="left:0;width:19.6px;text-align:right;top:422.50px;font-size:6.7px;line-height:8px;color:#8a1890">400</div>
<div class="a t" style="left:0;width:19.6px;text-align:right;top:456.60px;font-size:6.7px;line-height:8px;color:#8a1890">200</div>
<div class="a t" style="left:0;width:19.6px;text-align:right;top:486.90px;font-size:6.7px;line-height:8px;color:#8a1890">0</div>
<div class="a t " style="left:-35.00px;width:200px;text-align:center;top:496.96px;font-size:6.4px;line-height:7.68px;color:#111;">09:00</div>
<div class="a t " style="left:21.70px;width:200px;text-align:center;top:496.96px;font-size:6.4px;line-height:7.68px;color:#111;">11:00</div>
<div class="a t " style="left:78.60px;width:200px;text-align:center;top:496.96px;font-size:6.4px;line-height:7.68px;color:#111;">13:00</div>
<div class="a t " style="left:135.40px;width:200px;text-align:center;top:496.96px;font-size:6.4px;line-height:7.68px;color:#111;">15:00</div>
<div class="a t" style="left:240px;width:26.6px;text-align:right;top:314.20px;font-size:6.6px;line-height:8px;color:#2f8ba3">100.0</div>
<div class="a t" style="left:240px;width:26.6px;text-align:right;top:346.20px;font-size:6.6px;line-height:8px;color:#2f8ba3">80.0</div>
<div class="a t" style="left:240px;width:26.6px;text-align:right;top:382.40px;font-size:6.6px;line-height:8px;color:#2f8ba3">60.0</div>
<div class="a t" style="left:240px;width:26.6px;text-align:right;top:418.50px;font-size:6.6px;line-height:8px;color:#2f8ba3">40.0</div>
<div class="a t" style="left:240px;width:26.6px;text-align:right;top:454.60px;font-size:6.6px;line-height:8px;color:#2f8ba3">20.0</div>
<div class="a t" style="left:240px;width:26.6px;text-align:right;top:487.30px;font-size:6.6px;line-height:8px;color:#2f8ba3">0.0</div>
<div class="a t " style="left:211.00px;width:200px;text-align:center;top:496.96px;font-size:6.4px;line-height:7.68px;color:#111;">09:00</div>
<div class="a t " style="left:267.70px;width:200px;text-align:center;top:496.96px;font-size:6.4px;line-height:7.68px;color:#111;">11:00</div>
<div class="a " style="left:16.30px;top:256.20px;width:232.70px;height:8.00px;background:#d3e0e6;border:0.8px solid #86a9b6;border-radius:1px"></div>
<div class="a " style="left:52.50px;top:256.80px;width:23.50px;height:6.80px;background:#06e606"></div>
<div class="a " style="left:89.00px;top:256.80px;width:34.00px;height:6.80px;background:#06e606"></div>
<div class="a " style="left:18.00px;top:265.40px;width:8.40px;height:6.80px;background:#1a44c8;border-radius:0.8px"></div><svg width="745" height="520"><polygon points="22.2,266.59999999999997 19.2,268.79999999999995 22.2,270.99999999999994" fill="#fff"/><rect x="22.4" y="267.79999999999995" width="2.6" height="2" fill="#fff"/></svg>
<div class="a " style="left:28.00px;top:265.40px;width:8.40px;height:6.80px;background:#1a44c8;border-radius:0.8px"></div><svg width="745" height="520"><polygon points="32,266.59999999999997 29,268.79999999999995 32,270.99999999999994" fill="#fff"/><polygon points="35.2,266.59999999999997 32.2,268.79999999999995 35.2,270.99999999999994" fill="#fff"/></svg>
<div class="a t " style="left:38.00px;top:265.12px;font-size:5.8px;line-height:6.96px;color:#e02020;">9/22/22</div>
<div class="a " style="left:98.40px;top:265.20px;width:7.40px;height:6.60px;background:#e81848"></div>
<div class="a t " style="left:2.10px;width:200px;text-align:center;top:265.24px;font-size:5.6px;line-height:6.72px;color:#fff;font-weight:bold">X</div>
<div class="a " style="left:108.00px;top:265.20px;width:7.40px;height:6.60px;background:#e81848"></div>
<div class="a t " style="left:11.70px;width:200px;text-align:center;top:265.24px;font-size:5.6px;line-height:6.72px;color:#fff;font-weight:bold">U</div>
<div class="a " style="left:117.60px;top:265.00px;width:21.90px;height:7.00px;background:#dcdcdc"></div>
<div class="a t " style="left:29.30px;width:200px;text-align:center;top:265.12px;font-size:5.8px;line-height:6.96px;color:#111;">2.2 D</div>
<div class="a " style="left:141.40px;top:265.00px;width:7.60px;height:7.00px;background:#1a1ea0;border-radius:0.8px"></div><svg width="745" height="520"><polygon points="143.4,267.6 147.0,267.6 145.20000000000002,270" fill="#fff"/></svg>
<div class="a t " style="left:209.00px;top:265.12px;font-size:5.8px;line-height:6.96px;color:#e02020;">9/24/22</div>
<div class="a " style="left:229.60px;top:265.40px;width:8.40px;height:6.80px;background:#1a44c8;border-radius:0.8px"></div><svg width="745" height="520"><polygon points="230.79999999999998,266.59999999999997 233.79999999999998,268.79999999999995 230.79999999999998,270.99999999999994" fill="#fff"/><polygon points="234.0,266.59999999999997 237.0,268.79999999999995 234.0,270.99999999999994" fill="#fff"/></svg>
<div class="a " style="left:239.60px;top:265.40px;width:8.40px;height:6.80px;background:#1a44c8;border-radius:0.8px"></div><svg width="745" height="520"><rect x="241.0" y="267.79999999999995" width="2.6" height="2" fill="#fff"/><polygon points="243.79999999999998,266.59999999999997 246.79999999999998,268.79999999999995 243.79999999999998,270.99999999999994" fill="#fff"/></svg>
<div class="a " style="left:270.40px;top:265.40px;width:8.40px;height:6.80px;background:#1a44c8;border-radius:0.8px"></div><svg width="745" height="520"><polygon points="274.59999999999997,266.59999999999997 271.59999999999997,268.79999999999995 274.59999999999997,270.99999999999994" fill="#fff"/><rect x="274.79999999999995" y="267.79999999999995" width="2.6" height="2" fill="#fff"/></svg>
<div class="a " style="left:280.40px;top:265.40px;width:8.40px;height:6.80px;background:#1a44c8;border-radius:0.8px"></div><svg width="745" height="520"><polygon points="284.4,266.59999999999997 281.4,268.79999999999995 284.4,270.99999999999994" fill="#fff"/><polygon points="287.59999999999997,266.59999999999997 284.59999999999997,268.79999999999995 287.59999999999997,270.99999999999994" fill="#fff"/></svg>
<div class="a t " style="left:290.20px;top:265.12px;font-size:5.8px;line-height:6.96px;color:#111;">4/3/24</div>
<div class="a " style="left:365.80px;top:265.00px;width:23.60px;height:7.00px;background:#dcdcdc"></div>
<div class="a t " style="left:277.80px;width:200px;text-align:center;top:265.12px;font-size:5.8px;line-height:6.96px;color:#111;">8 H</div>
<div class="a " style="left:389.80px;top:265.00px;width:7.60px;height:7.00px;background:#1a1ea0;border-radius:0.8px"></div><svg width="745" height="520"><polygon points="391.8,267.6 395.40000000000003,267.6 393.6,270" fill="#fff"/></svg>
<div class="a " style="left:23.00px;top:506.00px;width:8.40px;height:6.80px;background:#1a44c8;border-radius:0.8px"></div><svg width="745" height="520"><polygon points="27.2,507.2 24.2,509.4 27.2,511.59999999999997" fill="#fff"/><rect x="27.4" y="508.4" width="2.6" height="2" fill="#fff"/></svg>
<div class="a " style="left:33.00px;top:506.00px;width:8.40px;height:6.80px;background:#1a44c8;border-radius:0.8px"></div><svg width="745" height="520"><polygon points="37,507.2 34,509.4 37,511.59999999999997" fill="#fff"/><polygon points="40.2,507.2 37.2,509.4 40.2,511.59999999999997" fill="#fff"/></svg>
<div class="a t " style="left:43.00px;top:505.82px;font-size:5.8px;line-height:6.96px;color:#111;">4/3/24</div>
<div class="a " style="left:120.00px;top:505.60px;width:23.40px;height:7.20px;background:#dcdcdc"></div>
<div class="a t " style="left:31.70px;width:200px;text-align:center;top:505.82px;font-size:5.8px;line-height:6.96px;color:#111;">8 H</div>
<div class="a " style="left:144.60px;top:505.60px;width:7.60px;height:7.00px;background:#1a1ea0;border-radius:0.8px"></div><svg width="745" height="520"><polygon points="146.6,508.20000000000005 150.2,508.20000000000005 148.4,510.6" fill="#fff"/></svg>
<div class="a t " style="left:211.50px;top:505.82px;font-size:5.8px;line-height:6.96px;color:#111;">4/3/24</div>
<div class="a " style="left:229.60px;top:506.00px;width:8.40px;height:6.80px;background:#1a44c8;border-radius:0.8px"></div><svg width="745" height="520"><polygon points="230.79999999999998,507.2 233.79999999999998,509.4 230.79999999999998,511.59999999999997" fill="#fff"/><polygon points="234.0,507.2 237.0,509.4 234.0,511.59999999999997" fill="#fff"/></svg>
<div class="a " style="left:239.60px;top:506.00px;width:8.40px;height:6.80px;background:#1a44c8;border-radius:0.8px"></div><svg width="745" height="520"><rect x="241.0" y="508.4" width="2.6" height="2" fill="#fff"/><polygon points="243.79999999999998,507.2 246.79999999999998,509.4 243.79999999999998,511.59999999999997" fill="#fff"/></svg>
<div class="a " style="left:270.40px;top:506.00px;width:8.40px;height:6.80px;background:#1a44c8;border-radius:0.8px"></div><svg width="745" height="520"><polygon points="274.59999999999997,507.2 271.59999999999997,509.4 274.59999999999997,511.59999999999997" fill="#fff"/><rect x="274.79999999999995" y="508.4" width="2.6" height="2" fill="#fff"/></svg>
<div class="a " style="left:280.40px;top:506.00px;width:8.40px;height:6.80px;background:#1a44c8;border-radius:0.8px"></div><svg width="745" height="520"><polygon points="284.4,507.2 281.4,509.4 284.4,511.59999999999997" fill="#fff"/><polygon points="287.59999999999997,507.2 284.59999999999997,509.4 287.59999999999997,511.59999999999997" fill="#fff"/></svg>
<div class="a t " style="left:290.20px;top:505.82px;font-size:5.8px;line-height:6.96px;color:#111;">4/3/24</div>
<div class="a " style="left:365.80px;top:505.60px;width:23.60px;height:7.20px;background:#dcdcdc"></div>
<div class="a t " style="left:277.80px;width:200px;text-align:center;top:505.82px;font-size:5.8px;line-height:6.96px;color:#111;">8 H</div>
<div class="a " style="left:389.80px;top:505.60px;width:7.60px;height:7.00px;background:#1a1ea0;border-radius:0.8px"></div><svg width="745" height="520"><polygon points="391.8,508.20000000000005 395.40000000000003,508.20000000000005 393.6,510.6" fill="#fff"/></svg>
</div><div class="win" id="dlg" style="left:0;top:0;width:570px;height:230px">
<div class="a " style="left:189.00px;top:6.50px;width:370.00px;height:216.00px;background:linear-gradient(to bottom left,#ffffff 0%,#fcfcfc 42%,#efefef 62%,#e0e0e0 80%,#d4d4d4 100%);border:1px solid #4a9c9c;border-left-color:#6fb6b6;border-bottom-color:#6fb6b6;border-top-color:#0a878a;border-radius:2px;box-shadow:0 1px 3px rgba(0,0,0,.35)"></div>
<div class="a " style="left:189.00px;top:6.50px;width:370.00px;height:16.70px;background:#0a878a;border-radius:2px 2px 0 0"></div>
<div class="a t " style="left:194.00px;top:11.74px;font-size:6.6px;line-height:7.92px;color:#fff;">Edit Alarm</div>
<div class="a " style="left:548.20px;top:11.60px;width:9.00px;height:9.00px;background:#d83a44"></div>
<div class="a t " style="left:452.80px;width:200px;text-align:center;top:12.54px;font-size:5.6px;line-height:6.72px;color:#fff;font-weight:bold">x</div>
<div class="a t " style="left:192.80px;top:26.82px;font-size:6.3px;line-height:7.56px;color:#161616;">Type</div>
<div class="a t " style="left:192.80px;top:41.22px;font-size:6.3px;line-height:7.56px;color:#161616;">Grade</div>
<div class="a t " style="left:192.80px;top:55.82px;font-size:6.3px;line-height:7.56px;color:#161616;">Description</div>
<div class="a t " style="left:192.80px;top:70.82px;font-size:6.3px;line-height:7.56px;color:#161616;">Start</div>
<div class="a t " style="left:192.80px;top:84.62px;font-size:6.3px;line-height:7.56px;color:#161616;">End</div>
<div class="a t " style="left:192.80px;top:99.72px;font-size:6.3px;line-height:7.56px;color:#161616;">Rule</div>
<div class="a t " style="left:192.80px;top:115.12px;font-size:6.3px;line-height:7.56px;color:#161616;">Process</div>
<div class="a t " style="left:192.80px;top:128.42px;font-size:6.3px;line-height:7.56px;color:#161616;">Reason</div>
<div class="a t " style="left:192.80px;top:150.82px;font-size:6.3px;line-height:7.56px;color:#161616;">Comment</div>
<svg width="570" height="230"><path d="M228.7,33.5 L229.7,29.2 Q230.8,26.8 231.9,29.2 L232.9,33.5 Z" fill="#e8323a"/><path d="M230.1,30 h1.4 v2 h-1.4z" fill="#fff" opacity=".75"/><path d="M227.2,27.6 q-0.9,2.4 0.2,4.8 M228.3,28.2 q-0.5,1.6 0.1,3.2 M234.4,27.6 q0.9,2.4 -0.2,4.8 M233.3,28.2 q0.5,1.6 -0.1,3.2" stroke="#e8323a" stroke-width="0.6" fill="none"/></svg>
<div class="a t " style="left:237.60px;top:26.82px;font-size:6.3px;line-height:7.56px;color:#161616;transform:scaleX(0.95) rotate(.03deg);transform-origin:0 50%;">Alarm Server</div>
<div class="a " style="left:317.30px;top:25.30px;width:41.30px;height:9.70px;background:#eee;border:0.7px solid #9a9a9a"></div>
<div class="a " style="left:319.40px;top:27.00px;width:5.60px;height:6.00px;background:#e02828;border-radius:50% 50% 20% 60%"></div>
<div class="a " style="left:322.00px;top:29.60px;width:3.60px;height:3.80px;background:#ececec;border-radius:50%"></div>
<div class="a t " style="left:327.00px;top:26.42px;font-size:6.3px;line-height:7.56px;color:#161616;">Alarm Conf</div>
<div class="a " style="left:226.00px;top:38.00px;width:253.40px;height:11.40px;background:#fff;border-top:0.8px solid #b8b8b8;border-bottom:0.6px solid #e4e4e4"></div>
<div class="a t " style="left:229.00px;top:40.22px;font-size:6.3px;line-height:7.56px;color:#161616;">O44MX</div>
<div class="a t " style="left:229.00px;top:55.82px;font-size:6.3px;line-height:7.56px;color:#161616;">O44MX</div>
<svg width="570" height="230"><polygon points="481.2,42.4 486.40000000000003,42.4 483.8,45.4" fill="#111"/></svg>
<svg width="570" height="230"><polygon points="481.2,71.8 486.40000000000003,71.8 483.8,74.8" fill="#111"/></svg>
<svg width="570" height="230"><polygon points="481.2,86.8 486.40000000000003,86.8 483.8,89.8" fill="#111"/></svg>
<div class="a " style="left:493.80px;top:36.40px;width:26.10px;height:16.60px;background:#e6e6e6;border:0.9px solid #9c9c9c;border-radius:1px"></div>
<div class="a t " style="left:406.80px;width:200px;text-align:center;top:40.92px;font-size:6.3px;line-height:7.56px;color:#161616;">Recalc</div>
<div class="a " style="left:226.00px;top:68.20px;width:253.40px;height:9.60px;background:#fff;border:0.8px solid #bdbdbd"></div>
<div class="a t " style="left:228.00px;top:69.92px;font-size:6.3px;line-height:7.56px;color:#161616;">9/23/2022 02:58:13</div>
<div class="a " style="left:226.00px;top:83.20px;width:253.40px;height:9.60px;background:#fff;border:0.8px solid #bdbdbd"></div>
<div class="a t " style="left:228.00px;top:84.82px;font-size:6.3px;line-height:7.56px;color:#161616;">9/23/2022 10:33:13</div>
<div class="a t " style="left:492.00px;top:84.62px;font-size:6.3px;line-height:7.56px;color:#161616;">Delta Time</div>
<div class="a " style="left:524.00px;top:81.20px;width:31.60px;height:13.20px;background:#fff;border:0.8px solid #c4c4c4"></div>
<div class="a t " style="left:526.00px;top:83.12px;font-size:5.8px;line-height:6.96px;color:#161616;">07:35:00</div>
<div class="a " style="left:226.00px;top:96.30px;width:329.60px;height:13.10px;background:#fff;border:0.8px solid #c8c8c8"></div>
<div class="a t " style="left:228.00px;top:97.82px;font-size:6.3px;line-height:7.56px;color:#161616;">Outside</div>
<div class="a " style="left:226.00px;top:112.30px;width:260.40px;height:12.10px;background:linear-gradient(#f4f4f4,#e6e6e6);border:0.8px solid #b4b4b4;border-radius:1.5px"></div>
<div class="a t " style="left:230.40px;top:115.22px;font-size:6.3px;line-height:7.56px;color:#161616;">PM2</div>
<svg width="570" height="230"><polyline points="479.6,117.6 481.4,119.6 483.2,117.6" fill="none" stroke="#444" stroke-width="0.8"/></svg>
<div class="a " style="left:226.00px;top:124.60px;width:297.80px;height:20.60px;background:#fff;border:0.8px solid #c8c8c8"></div>
<div class="a t " style="left:228.00px;top:127.02px;font-size:6.3px;line-height:7.56px;color:#161616;">PM : Refiner : High temperature</div>
<div class="a " style="left:526.60px;top:130.30px;width:13.20px;height:10.50px;background:#dedede;border:1px solid #8a8a8a"></div>
<div class="a t " style="left:433.20px;width:200px;text-align:center;top:132.90px;font-size:5.5px;line-height:6.60px;color:#222;">...</div>
<div class="a " style="left:543.00px;top:130.30px;width:12.40px;height:10.50px;background:#f6f6f6;border:0.8px solid #c4c4c4"></div>
<div class="a t " style="left:449.20px;width:200px;text-align:center;top:131.90px;font-size:5.5px;line-height:6.60px;color:#222;">*</div>
<div class="a " style="left:226.00px;top:147.60px;width:329.60px;height:54.60px;background:#fff;border:0.8px solid #c8c8c8"></div>
<div class="a t " style="left:228.00px;top:148.82px;font-size:6.3px;line-height:7.56px;color:#161616;">Refiners won't take load. More comments</div>
<div class="a " style="left:210.80px;top:204.30px;width:51.90px;height:15.60px;background:linear-gradient(#ededed,#dedede);border:0.9px solid #9a9a9a"></div><div class="a " style="left:223.40px;top:208.20px;width:8.00px;height:7.80px;border:1.1px solid #7f7ce0;background:#f4f4ff;border-radius:0.8px"></div><div class="a " style="left:225.40px;top:208.20px;width:4.00px;height:2.40px;background:#7f7ce0"></div><div class="a t " style="left:140.35px;width:200px;text-align:center;top:208.52px;font-size:6.3px;line-height:7.56px;color:#161616;">Save</div>
<div class="a " style="left:265.60px;top:204.30px;width:52.40px;height:15.60px;background:linear-gradient(#ededed,#dedede);border:0.9px solid #9a9a9a"></div><svg width="570" height="230"><path d="M276.6,209.4 l5.6,5.8 M282.2,209.4 l-5.6,5.8" stroke="#c01818" stroke-width="1.3" fill="none"/></svg><div class="a t " style="left:195.40px;width:200px;text-align:center;top:208.52px;font-size:6.3px;line-height:7.56px;color:#161616;">Delete</div>
<div class="a " style="left:320.40px;top:204.30px;width:52.60px;height:15.60px;background:linear-gradient(#ededed,#dedede);border:0.9px solid #9a9a9a"></div><div class="a " style="left:333.40px;top:208.60px;width:8.20px;height:7.20px;background:#1c2c6c;border-radius:0.8px"></div><div class="a " style="left:334.40px;top:209.80px;width:2.40px;height:2.20px;background:#7ab0f0"></div><div class="a " style="left:338.20px;top:212.20px;width:2.40px;height:2.40px;background:#7ab0f0"></div><div class="a t " style="left:250.30px;width:200px;text-align:center;top:208.52px;font-size:6.3px;line-height:7.56px;color:#161616;">Split</div>
<div class="a " style="left:375.60px;top:204.30px;width:52.40px;height:15.60px;background:#f7f7f7;border:0.9px solid #b4b4b4"></div>
<svg width="570" height="230"><polygon points="385.6,207.4 390.6,209.6 388.2,214.4 383.2,212.2" fill="#2a86e6"/><polygon points="383.2,212.2 388.2,214.4 388,216 383,213.8" fill="#114a9c"/></svg>
</div><div class="win" id="w2" style="left:0;top:0;width:1000px;height:613px">
<div class="a " style="left:391.00px;top:178.00px;width:607.40px;height:434.00px;background:#3d3d3d;border-radius:3px 3px 2px 2px"></div>
<div class="a " style="left:391.00px;top:178.00px;width:607.40px;height:28.00px;background:linear-gradient(#787878,#6e6e6e 25%,#6a6a6a 75%,#606060);border-radius:3px 3px 0 0;border-top:1px solid #858585;border-right:1.6px solid #4a4a4a;border-left:1.2px solid #565656"></div>
<div class="a " style="left:391.00px;top:204.40px;width:607.40px;height:3.20px;background:linear-gradient(#5a5a5a,#444 45%,#333)"></div>
<div class="a " style="left:395.80px;top:207.60px;width:598.40px;height:399.80px;background:#f5f5f5"></div>
<div class="a " style="left:395.80px;top:207.60px;width:9.60px;height:399.80px;background:linear-gradient(90deg,#d2d2d2,#ececec)"></div>
<div class="a " style="left:405.40px;top:207.60px;width:3.70px;height:399.80px;background:#0a0a0a"></div>
<div class="a " style="left:394.60px;top:182.40px;width:16.80px;height:16.80px;border-radius:50%;background:radial-gradient(circle at 45% 40%,#fff 0,#f2f2f2 50%,#c4c4c4 100%);border:1px solid #8a8a8a"></div>
<div class="a " style="left:398.20px;top:186.40px;width:9.40px;height:1.70px;background:#cfa020"></div>
<div class="a " style="left:398.20px;top:188.50px;width:8.00px;height:1.70px;background:#cfa020"></div>
<div class="a " style="left:398.20px;top:190.60px;width:6.40px;height:1.70px;background:#cfa020"></div>
<div class="a " style="left:398.20px;top:192.70px;width:4.60px;height:1.70px;background:#cfa020"></div>
<div class="a " style="left:414.00px;top:180.60px;width:145.40px;height:10.30px;background:#878787;border-radius:1px 5px 5px 8px"></div>
<div class="a " style="left:416.00px;top:181.60px;width:7.00px;height:5.00px;background:#f2dc30"></div><div class="a " style="left:418.50px;top:184.60px;width:6.00px;height:6.00px;background:#2038b0;border-radius:50%;border:1px solid #d8d8e8"></div>
<div class="a " style="left:426.40px;top:182.00px;width:8.00px;height:8.50px;background:#2858b8;border-radius:1px"></div><div class="a " style="left:427.60px;top:185.00px;width:5.60px;height:4.50px;background:#e8f0fc"></div><div class="a " style="left:427.40px;top:181.20px;width:2.00px;height:2.00px;background:#e8e8f8"></div>
<div class="a " style="left:436.40px;top:182.00px;width:8.00px;height:8.50px;background:#2858b8;border-radius:1px"></div><div class="a " style="left:437.60px;top:185.00px;width:5.60px;height:4.50px;background:#e8f0fc"></div><div class="a " style="left:437.40px;top:181.20px;width:2.00px;height:2.00px;background:#e8e8f8"></div>
<div class="a " style="left:440.60px;top:186.40px;width:2.80px;height:2.80px;background:#f0d020"></div>
<div class="a " style="left:446.40px;top:184.00px;width:9.00px;height:5.50px;background:#282828;border-radius:1px"></div><div class="a " style="left:448.40px;top:182.00px;width:5.00px;height:2.50px;background:#e8e8e8"></div><div class="a " style="left:448.40px;top:187.50px;width:5.00px;height:3.00px;background:#f4f4f4"></div>
<div class="a " style="left:456.20px;top:182.40px;width:5.60px;height:7.20px;background:radial-gradient(circle,#9cc4f4 0,#9cc4f4 22%,#1c5cc0 30%);border-radius:45%"></div>
<div class="a " style="left:462.60px;top:181.20px;width:82.60px;height:9.60px;background:#fff"></div>
<div class="a " style="left:546.00px;top:181.80px;width:9.40px;height:8.60px;background:#dcdcdc;border:0.8px solid #9a9a9a"></div>
<div class="a t " style="left:450.70px;width:200px;text-align:center;top:184.24px;font-size:4.6px;line-height:5.52px;color:#333;">...</div>
<div class="a t " style="left:562.00px;top:182.84px;font-size:3.6px;line-height:4.32px;color:#111;">▾</div>
<div class="a t " style="left:421.40px;top:195.42px;font-size:6.3px;line-height:7.56px;color:#e6e6e6;transform:scaleX(0.82) rotate(.03deg);transform-origin:0 50%;">File</div>
<div class="a t " style="left:443.00px;top:195.42px;font-size:6.3px;line-height:7.56px;color:#e6e6e6;transform:scaleX(0.82) rotate(.03deg);transform-origin:0 50%;">Display</div>
<div class="a t " style="left:473.00px;top:195.42px;font-size:6.3px;line-height:7.56px;color:#e6e6e6;transform:scaleX(0.82) rotate(.03deg);transform-origin:0 50%;">Windows</div>
<div class="a t " style="left:507.80px;top:195.42px;font-size:6.3px;line-height:7.56px;color:#e6e6e6;transform:scaleX(0.82) rotate(.03deg);transform-origin:0 50%;">Help</div>
<div class="a " style="left:955.60px;top:185.00px;width:5.40px;height:2.00px;background:#eee;border-radius:1px"></div>
<div class="a " style="left:971.20px;top:182.40px;width:5.20px;height:4.80px;border:1.4px solid #eee;border-radius:1.2px"></div>
<div class="a t " style="left:889.00px;width:200px;text-align:center;top:180.70px;font-size:7px;line-height:8.40px;color:#f4f4f4;font-weight:bold">x</div>
<div class="a " style="left:396.90px;top:208.10px;width:8.00px;height:8.00px;background:#fff;border:1px solid #222;border-radius:50%"></div>
<svg width="1000" height="613"><polyline points="400,210.2 402,212.1 400,214" fill="none" stroke="#111" stroke-width="1"/></svg>
<div class="a t" id="rb" style="left:400.4px;top:411.5px;font-size:6.3px;line-height:7px;color:#111;transform:translate(-50%,-50%) rotate(-90.02deg)"><b>Run Browser</b> (Collapse/Expand)</div>
<div class="a " style="left:408.80px;top:207.60px;width:585.40px;height:9.00px;background:linear-gradient(#e9e9e9,#dcdcdc);border-bottom:0.9px solid #9c9c9c"></div>
<div class="a " style="left:409.50px;top:207.90px;width:8.60px;height:8.60px;background:#fff;border:1px solid #222;border-radius:50%"></div>
<svg width="1000" height="613"><polyline points="411.8,213 413.9,210.9 416,213" fill="none" stroke="#111" stroke-width="1"/></svg>
<div class="a t " style="left:662.80px;top:208.86px;font-size:5.9px;line-height:7.08px;color:#111;transform:scaleX(0.905) rotate(.03deg);transform-origin:0 50%;"><b>Pareto Settings</b>&nbsp; (Collapse/Expand)</div>
<div class="a " style="left:408.80px;top:216.20px;width:585.40px;height:89.20px;background:#d5d5d5;border-bottom:1.7px solid #8e8e8e;border-top:0.9px solid #a2a2a2"></div>
<div class="a " style="left:409.90px;top:222.00px;width:196.90px;height:39.20px;border:0.6px solid #c9c9c9;box-shadow:0.6px 0.6px 0 #e4e4e4,inset 0.6px 0.6px 0 #e4e4e4;border-radius:1px"></div>
<div class="a " style="left:462.30px;top:269.40px;width:90.10px;height:33.20px;border:0.6px solid #c9c9c9;box-shadow:0.6px 0.6px 0 #e4e4e4,inset 0.6px 0.6px 0 #e4e4e4;border-radius:1px"></div>
<div class="a " style="left:557.30px;top:269.40px;width:49.50px;height:33.20px;border:0.6px solid #c9c9c9;box-shadow:0.6px 0.6px 0 #e4e4e4,inset 0.6px 0.6px 0 #e4e4e4;border-radius:1px"></div>
<div class="a " style="left:612.00px;top:222.00px;width:170.00px;height:80.60px;border:0.6px solid #c9c9c9;box-shadow:0.6px 0.6px 0 #e4e4e4,inset 0.6px 0.6px 0 #e4e4e4;border-radius:1px"></div>
<div class="a " style="left:786.70px;top:222.00px;width:144.30px;height:80.60px;border:0.6px solid #c9c9c9;box-shadow:0.6px 0.6px 0 #e4e4e4,inset 0.6px 0.6px 0 #e4e4e4;border-radius:1px"></div>
<div class="a " style="left:935.00px;top:222.00px;width:48.00px;height:80.60px;border:0.6px solid #c9c9c9;box-shadow:0.6px 0.6px 0 #e4e4e4,inset 0.6px 0.6px 0 #e4e4e4;border-radius:1px"></div>
<div class="a t " style="left:412.80px;top:217.20px;font-size:6.5px;line-height:7.80px;color:#111;transform:scaleX(0.83) rotate(.03deg);transform-origin:0 50%;background:#d5d5d5;padding:0 1px;margin-left:-1px;">Event Sources</div>
<svg width="1000" height="613"><circle cx="414.8" cy="231" r="2.6" fill="#fbfbfb" stroke="#7c7c7c" stroke-width="0.6"/><circle cx="414.8" cy="231" r="1.35" fill="#111"/></svg>
<div class="a t " style="left:420.80px;top:227.20px;font-size:6.5px;line-height:7.80px;color:#111;transform:scaleX(0.83) rotate(.03deg);transform-origin:0 50%;">Use Tag(s)</div>
<svg width="1000" height="613"><circle cx="452.8" cy="231" r="2.6" fill="#fbfbfb" stroke="#7c7c7c" stroke-width="0.6"/></svg>
<div class="a t " style="left:459.40px;top:227.20px;font-size:6.5px;line-height:7.80px;color:#111;transform:scaleX(0.83) rotate(.03deg);transform-origin:0 50%;">Use Process</div>
<svg width="1000" height="613"><circle cx="496.2" cy="231" r="2.6" fill="#fbfbfb" stroke="#7c7c7c" stroke-width="0.6"/></svg>
<div class="a t " style="left:502.40px;top:227.20px;font-size:6.5px;line-height:7.80px;color:#111;transform:scaleX(0.83) rotate(.03deg);transform-origin:0 50%;">Use Alarm Tag(s)</div>
<div class="a t " style="left:415.00px;top:239.00px;font-size:6.5px;line-height:7.80px;color:#111;transform:scaleX(0.83) rotate(.03deg);transform-origin:0 50%;">Multiple Tags</div>
<div class="a " style="left:450.40px;top:239.60px;width:6.60px;height:6.60px;background:#fff;border:0.6px solid #9c9c9c;border-radius:1px"></div>
<div class="a t " style="left:415.40px;top:251.20px;font-size:6.5px;line-height:7.80px;color:#111;transform:scaleX(0.83) rotate(.03deg);transform-origin:0 50%;">Tags</div>
<div class="a " style="left:449.80px;top:249.00px;width:118.60px;height:11.20px;background:#fff"></div>
<div class="a t " style="left:451.20px;top:251.06px;font-size:6.4px;line-height:7.68px;color:#444;transform:scaleX(0.83) rotate(.03deg);transform-origin:0 50%;">VAN.PHD.02PM2Down</div>
<svg width="1000" height="613"><polygon points="562.8,254 565.4,254 564.1,255.6" fill="#222"/></svg>
<div class="a " style="left:413.20px;top:276.60px;width:37.60px;height:14.00px;background:linear-gradient(#e4e4e4,#d6d6d6);border:0.8px solid #9c9c9c;border-radius:0.5px"></div>
<div class="a " style="left:414.40px;top:277.80px;width:12.20px;height:11.60px;background:linear-gradient(#fafafa,#d8d8d8);border:0.7px solid #999;border-radius:1px"></div>
<svg width="1000" height="613"><polygon points="417,280 424.6,280 423.4,283.4 421.6,286.8 419.8,287.6 417,287.6" fill="#cdb060"/><polygon points="417,280 424.6,280 424,281.6 417,281.6" fill="#e2cc88"/></svg>
<div class="a t " style="left:431.40px;top:280.20px;font-size:6.5px;line-height:7.80px;color:#111;transform:scaleX(0.83) rotate(.03deg);transform-origin:0 50%;">Plot</div>
<div class="a t " style="left:466.00px;top:264.00px;font-size:6.5px;line-height:7.80px;color:#111;transform:scaleX(0.83) rotate(.03deg);transform-origin:0 50%;background:#d5d5d5;padding:0 1px;margin-left:-1px;">Bar Type</div>
<svg width="1000" height="613"><circle cx="467" cy="276.6" r="2.6" fill="#fbfbfb" stroke="#7c7c7c" stroke-width="0.6"/><circle cx="467" cy="276.6" r="1.35" fill="#111"/></svg>
<div class="a t " style="left:471.40px;top:272.80px;font-size:6.5px;line-height:7.80px;color:#111;transform:scaleX(0.83) rotate(.03deg);transform-origin:0 50%;">Time</div>
<svg width="1000" height="613"><circle cx="467" cy="286.6" r="2.6" fill="#fbfbfb" stroke="#7c7c7c" stroke-width="0.6"/></svg>
<div class="a t " style="left:471.40px;top:282.80px;font-size:6.5px;line-height:7.80px;color:#111;transform:scaleX(0.83) rotate(.03deg);transform-origin:0 50%;">Count</div>
<svg width="1000" height="613"><circle cx="467" cy="296.8" r="2.6" fill="#fbfbfb" stroke="#7c7c7c" stroke-width="0.6"/></svg>
<div class="a t " style="left:471.40px;top:293.00px;font-size:6.5px;line-height:7.80px;color:#111;transform:scaleX(0.83) rotate(.03deg);transform-origin:0 50%;">Evidence</div>
<div class="a " style="left:495.80px;top:291.60px;width:55.00px;height:10.00px;background:#e4e4e4;border:0.6px solid #d0d0d0;border-radius:1px"></div>
<div class="a t " style="left:561.80px;top:264.00px;font-size:6.5px;line-height:7.80px;color:#111;transform:scaleX(0.83) rotate(.03deg);transform-origin:0 50%;background:#d5d5d5;padding:0 1px;margin-left:-1px;">Report Style</div>
<svg width="1000" height="613"><circle cx="562.6" cy="276.6" r="2.6" fill="#fbfbfb" stroke="#7c7c7c" stroke-width="0.6"/><circle cx="562.6" cy="276.6" r="1.35" fill="#111"/></svg>
<div class="a t " style="left:567.00px;top:272.80px;font-size:6.5px;line-height:7.80px;color:#111;transform:scaleX(0.83) rotate(.03deg);transform-origin:0 50%;">Pareto Chart</div>
<svg width="1000" height="613"><circle cx="562.6" cy="286.6" r="2.6" fill="#fbfbfb" stroke="#7c7c7c" stroke-width="0.6"/></svg>
<div class="a t " style="left:567.00px;top:282.80px;font-size:6.5px;line-height:7.80px;color:#111;transform:scaleX(0.83) rotate(.03deg);transform-origin:0 50%;">Tabular Report</div>
<div class="a t " style="left:615.40px;top:217.20px;font-size:6.5px;line-height:7.80px;color:#111;transform:scaleX(0.83) rotate(.03deg);transform-origin:0 50%;background:#d5d5d5;padding:0 1px;margin-left:-1px;">Filters</div>
<div class="a t " style="left:616.20px;top:227.20px;font-size:6.5px;line-height:7.80px;color:#111;transform:scaleX(0.83) rotate(.03deg);transform-origin:0 50%;">Categories</div>
<div class="a t " style="left:616.20px;top:239.20px;font-size:6.5px;line-height:7.80px;color:#111;transform:scaleX(0.83) rotate(.03deg);transform-origin:0 50%;">Top Cause</div>
<div class="a t " style="left:616.20px;top:251.20px;font-size:6.5px;line-height:7.80px;color:#111;transform:scaleX(0.83) rotate(.03deg);transform-origin:0 50%;">Max Depth</div>
<div class="a t " style="left:616.20px;top:263.20px;font-size:6.5px;line-height:7.80px;color:#111;transform:scaleX(0.83) rotate(.03deg);transform-origin:0 50%;">Ignore Levels</div>
<div class="a t " style="left:616.20px;top:275.20px;font-size:6.5px;line-height:7.80px;color:#111;transform:scaleX(0.83) rotate(.03deg);transform-origin:0 50%;">Equipment</div>
<div class="a t " style="left:616.20px;top:287.20px;font-size:6.5px;line-height:7.80px;color:#111;transform:scaleX(0.83) rotate(.03deg);transform-origin:0 50%;">Max Depth</div>
<div class="a " style="left:651.00px;top:225.80px;width:118.20px;height:10.60px;background:#fff;border:0.8px solid #999;border-bottom:1px solid #3a3a3a;border-radius:1px"></div>
<div class="a " style="left:758.80px;top:226.40px;width:9.80px;height:9.20px;background:linear-gradient(#cfe0f4,#a8c4e6);border-left:0.8px solid #8aa4c8"></div>
<svg width="1000" height="613"><polygon points="762,230.2 765.6,230.2 763.8,232.4" fill="#123"/></svg>
<div class="a " style="left:651.00px;top:237.60px;width:117.20px;height:10.60px;background:#fff"></div>
<div class="a " style="left:771.20px;top:237.40px;width:9.20px;height:10.80px;background:#dcdcdc;border:0.8px solid #8c8c8c"></div>
<div class="a t " style="left:675.90px;width:200px;text-align:center;top:241.94px;font-size:4.6px;line-height:5.52px;color:#222;transform:scaleX(0.83) rotate(.03deg);transform-origin:50% 50%;">...</div>
<div class="a " style="left:651.00px;top:249.80px;width:22.60px;height:10.40px;background:#fff"></div><div class="a t " style="left:653.00px;top:251.20px;font-size:6.5px;line-height:7.80px;color:#111;transform:scaleX(0.83) rotate(.03deg);transform-origin:0 50%;">0</div><svg width="1000" height="613"><polygon points="669.4,253.4 672,253.4 670.7,251.4" fill="#111"/><polygon points="669.4,256.8 672,256.8 670.7,258.6" fill="#111"/></svg><div class="a t " style="left:678.40px;top:250.90px;font-size:7px;line-height:8.40px;color:#111;transform:scaleX(0.83) rotate(.03deg);transform-origin:0 50%;">(0 = Unlimited)</div>
<div class="a " style="left:651.00px;top:261.80px;width:22.60px;height:10.40px;background:#fff"></div><div class="a t " style="left:653.00px;top:263.20px;font-size:6.5px;line-height:7.80px;color:#111;transform:scaleX(0.83) rotate(.03deg);transform-origin:0 50%;">0</div><svg width="1000" height="613"><polygon points="669.4,265.4 672,265.4 670.7,263.4" fill="#111"/><polygon points="669.4,268.8 672,268.8 670.7,270.6" fill="#111"/></svg><div class="a t " style="left:678.40px;top:262.90px;font-size:7px;line-height:8.40px;color:#111;transform:scaleX(0.83) rotate(.03deg);transform-origin:0 50%;">(0 = Unlimited)</div>
<div class="a " style="left:651.00px;top:285.80px;width:22.60px;height:10.40px;background:#fff"></div><div class="a t " style="left:653.00px;top:287.20px;font-size:6.5px;line-height:7.80px;color:#111;transform:scaleX(0.83) rotate(.03deg);transform-origin:0 50%;">0</div><svg width="1000" height="613"><polygon points="669.4,289.4 672,289.4 670.7,287.4" fill="#111"/><polygon points="669.4,292.8 672,292.8 670.7,294.6" fill="#111"/></svg><div class="a t " style="left:678.40px;top:286.90px;font-size:7px;line-height:8.40px;color:#111;transform:scaleX(0.83) rotate(.03deg);transform-origin:0 50%;">(0 = Unlimited)</div>
<div class="a " style="left:651.00px;top:273.00px;width:117.20px;height:10.60px;background:linear-gradient(#ececec,#d4d4d4);border:0.8px solid #a4a4a4;border-radius:1.5px"></div>
<svg width="1000" height="613"><polygon points="763,278 765.8,278 764.4,279.8" fill="#111"/></svg>
<div class="a t " style="left:789.80px;top:217.20px;font-size:6.5px;line-height:7.80px;color:#111;transform:scaleX(0.83) rotate(.03deg);transform-origin:0 50%;background:#d5d5d5;padding:0 1px;margin-left:-1px;">Grouping</div>
<div class="a t " style="left:789.80px;top:226.00px;font-size:6.5px;line-height:7.80px;color:#111;transform:scaleX(0.83) rotate(.03deg);transform-origin:0 50%;">Top Count</div>
<div class="a t " style="left:789.80px;top:236.20px;font-size:6.5px;line-height:7.80px;color:#111;transform:scaleX(0.83) rotate(.03deg);transform-origin:0 50%;">All Others</div>
<div class="a t " style="left:789.80px;top:246.50px;font-size:6.5px;line-height:7.80px;color:#111;transform:scaleX(0.83) rotate(.03deg);transform-origin:0 50%;">Group Shared Causes</div>
<div class="a t " style="left:789.80px;top:256.70px;font-size:6.5px;line-height:7.80px;color:#111;transform:scaleX(0.83) rotate(.03deg);transform-origin:0 50%;">Unassigned Causes</div>
<div class="a t " style="left:789.80px;top:267.00px;font-size:6.5px;line-height:7.80px;color:#111;transform:scaleX(0.83) rotate(.03deg);transform-origin:0 50%;">Grouping Style</div>
<div class="a " style="left:844.40px;top:224.20px;width:16.20px;height:11.00px;background:#fff"></div>
<div class="a t " style="left:846.40px;top:225.06px;font-size:6.4px;line-height:7.68px;color:#111;transform:scaleX(0.83) rotate(.03deg);transform-origin:0 50%;">10</div>
<div class="a " style="left:845.00px;top:236.80px;width:6.60px;height:6.60px;background:#fff;border:0.6px solid #9c9c9c;border-radius:1px"></div>
<div class="a " style="left:845.00px;top:247.00px;width:6.60px;height:6.60px;background:#fff;border:0.6px solid #9c9c9c;border-radius:1px"></div>
<div class="a " style="left:845.00px;top:257.20px;width:6.60px;height:6.60px;background:#fff;border:0.6px solid #9c9c9c;border-radius:1px"></div>
<div class="a " style="left:844.40px;top:264.60px;width:83.80px;height:11.00px;background:linear-gradient(#f0f0f0,#dedede);border:0.8px solid #b0b0b0;border-radius:1px"></div>
<div class="a t " style="left:847.40px;top:266.52px;font-size:6.3px;line-height:7.56px;color:#111;transform:scaleX(0.83) rotate(.03deg);transform-origin:0 50%;">By Reason And Run</div>
<svg width="1000" height="613"><polyline points="921.6,269.6 923.2,271.2 924.8,269.6" fill="none" stroke="#444" stroke-width="0.7"/></svg>
<div class="a t " style="left:938.00px;top:217.20px;font-size:6.5px;line-height:7.80px;color:#111;transform:scaleX(0.83) rotate(.03deg);transform-origin:0 50%;background:#d5d5d5;padding:0 1px;margin-left:-1px;">Show/Hide</div>
<div class="a t " style="left:938.00px;top:226.00px;font-size:6.5px;line-height:7.80px;color:#111;transform:scaleX(0.83) rotate(.03deg);transform-origin:0 50%;">Run Browser</div>
<div class="a t " style="left:938.00px;top:236.20px;font-size:6.5px;line-height:7.80px;color:#111;transform:scaleX(0.83) rotate(.03deg);transform-origin:0 50%;">Legend</div>
<div class="a " style="left:971.40px;top:226.60px;width:6.60px;height:6.60px;background:#fff;border:0.6px solid #9c9c9c;border-radius:1px"></div>
<div class="a " style="left:971.40px;top:237.00px;width:6.60px;height:6.60px;background:#fff;border:0.6px solid #9c9c9c;border-radius:1px"></div><svg width="1000" height="613"><polyline points="972.9,240.4 974.1999999999999,241.9 976.6,238.6" fill="none" stroke="#111" stroke-width="1.15"/></svg>
<div class="a t " style="left:564.80px;width:200px;text-align:center;top:313.12px;font-size:6.3px;line-height:7.56px;color:#111;font-weight:bold">Events From 9/1/2022 12:00:00 AM To 9/24/2022 2:41:18 PM - PM :</div>
<div class="a " style="left:413.20px;top:335.00px;width:503.80px;height:268.00px;background:#fcfcfc;border:0.8px solid #d6d6d6;border-radius:2px"></div>
<div class="a t " style="left:877.20px;top:344.50px;font-size:4.5px;line-height:5.40px;color:#222;-webkit-text-stroke-width:0;transform:none">Utilities : No Steam</div>
<div class="a t " style="left:876.20px;top:350.60px;font-size:4.5px;line-height:5.40px;color:#222;-webkit-text-stroke-width:0;transform:none">(Duration00.19:37:59 (Count2)</div>
<div class="a t " style="left:662.89px;top:367.90px;font-size:4.5px;line-height:5.40px;color:#222;-webkit-text-stroke-width:0;transform:none">Dry End : Condensate backup</div>
<div class="a t " style="left:661.89px;top:374.00px;font-size:4.5px;line-height:5.40px;color:#222;-webkit-text-stroke-width:0;transform:none">(Duration00.10:24:00 (Count3)</div>
<div class="a t " style="left:650.78px;top:391.30px;font-size:4.5px;line-height:5.40px;color:#222;-webkit-text-stroke-width:0;transform:none">Dry End</div>
<div class="a t " style="left:649.78px;top:397.40px;font-size:4.5px;line-height:5.40px;color:#222;-webkit-text-stroke-width:0;transform:none">(Duration00.09:52:42 (Count1)</div>
<div class="a t " style="left:597.52px;top:414.70px;font-size:4.5px;line-height:5.40px;color:#222;-webkit-text-stroke-width:0;transform:none">Refiner : High temperature</div>
<div class="a t " style="left:596.52px;top:420.80px;font-size:4.5px;line-height:5.40px;color:#222;-webkit-text-stroke-width:0;transform:none">(Duration00.07:35:00 (Count1)</div>
<div class="a t " style="left:549.46px;top:438.10px;font-size:4.5px;line-height:5.40px;color:#222;-webkit-text-stroke-width:0;transform:none">Quality : Low HPD/T</div>
<div class="a t " style="left:548.46px;top:444.20px;font-size:4.5px;line-height:5.40px;color:#222;-webkit-text-stroke-width:0;transform:none">(Duration00.05:30:47 (Count2)</div>
<div class="a t " style="left:541.82px;top:461.50px;font-size:4.5px;line-height:5.40px;color:#222;-webkit-text-stroke-width:0;transform:none">Refiner : Low consistency</div>
<div class="a t " style="left:540.82px;top:467.60px;font-size:4.5px;line-height:5.40px;color:#222;-webkit-text-stroke-width:0;transform:none">(Duration00.05:11:01 (Count1)</div>
<div class="a t " style="left:476.43px;top:484.90px;font-size:4.5px;line-height:5.40px;color:#222;-webkit-text-stroke-width:0;transform:none">Utilities : No Power</div>
<div class="a t " style="left:475.43px;top:491.00px;font-size:4.5px;line-height:5.40px;color:#222;-webkit-text-stroke-width:0;transform:none">(Duration00.02:22:00 (Count1)</div>
<div class="a t " style="left:475.27px;top:508.30px;font-size:4.5px;line-height:5.40px;color:#222;-webkit-text-stroke-width:0;transform:none">Headbox : Jet to Wire control</div>
<div class="a t " style="left:474.27px;top:514.40px;font-size:4.5px;line-height:5.40px;color:#222;-webkit-text-stroke-width:0;transform:none">(Duration00.02:19:00 (Count4)</div>
<div class="a t " style="left:471.13px;top:531.70px;font-size:4.5px;line-height:5.40px;color:#222;-webkit-text-stroke-width:0;transform:none">Headbox</div>
<div class="a t " style="left:470.13px;top:537.80px;font-size:4.5px;line-height:5.40px;color:#222;-webkit-text-stroke-width:0;transform:none">(Duration00.02:08:18 (Count1)</div>
<div class="a t " style="left:450.52px;top:555.10px;font-size:4.5px;line-height:5.40px;color:#222;-webkit-text-stroke-width:0;transform:none">Dry End : Edge cut Frontside</div>
<div class="a t " style="left:449.52px;top:561.20px;font-size:4.5px;line-height:5.40px;color:#222;-webkit-text-stroke-width:0;transform:none">(Duration00.01:15:01 (Count2)</div>
<svg width="1000" height="613"><rect x="418.1" y="341.00" width="456.10" height="18.35" fill="#dca524" stroke="#b0841a" stroke-width="0.8"/><rect x="418.1" y="364.40" width="241.79" height="18.35" fill="#dca524" stroke="#b0841a" stroke-width="0.8"/><rect x="418.1" y="387.80" width="229.68" height="18.35" fill="#dca524" stroke="#b0841a" stroke-width="0.8"/><rect x="418.1" y="411.20" width="176.42" height="18.35" fill="#dca524" stroke="#b0841a" stroke-width="0.8"/><rect x="418.1" y="434.60" width="128.36" height="18.35" fill="#dca524" stroke="#b0841a" stroke-width="0.8"/><rect x="418.1" y="458.00" width="120.72" height="18.35" fill="#dca524" stroke="#b0841a" stroke-width="0.8"/><rect x="418.1" y="481.40" width="55.33" height="18.35" fill="#dca524" stroke="#b0841a" stroke-width="0.8"/><rect x="418.1" y="504.80" width="54.17" height="18.35" fill="#dca524" stroke="#b0841a" stroke-width="0.8"/><rect x="418.1" y="528.20" width="50.03" height="18.35" fill="#dca524" stroke="#b0841a" stroke-width="0.8"/><rect x="418.1" y="551.60" width="29.42" height="18.35" fill="#dca524" stroke="#b0841a" stroke-width="0.8"/></svg>
<div class="a " style="left:918.80px;top:463.40px;width:68.60px;height:12.00px;background:#e0e0e0;border:0.6px solid #d0d0d0;border-radius:1.5px"></div>
<div class="a " style="left:922.00px;top:466.20px;width:5.80px;height:6.40px;background:#dca524;border:0.7px solid #a07c18;border-radius:1px"></div>
<div class="a t " style="left:931.00px;top:466.20px;font-size:5.5px;line-height:6.60px;color:#444;-webkit-text-stroke-width:0">9/1/2022 12:00:00 AM</div>
</div></body></html>
